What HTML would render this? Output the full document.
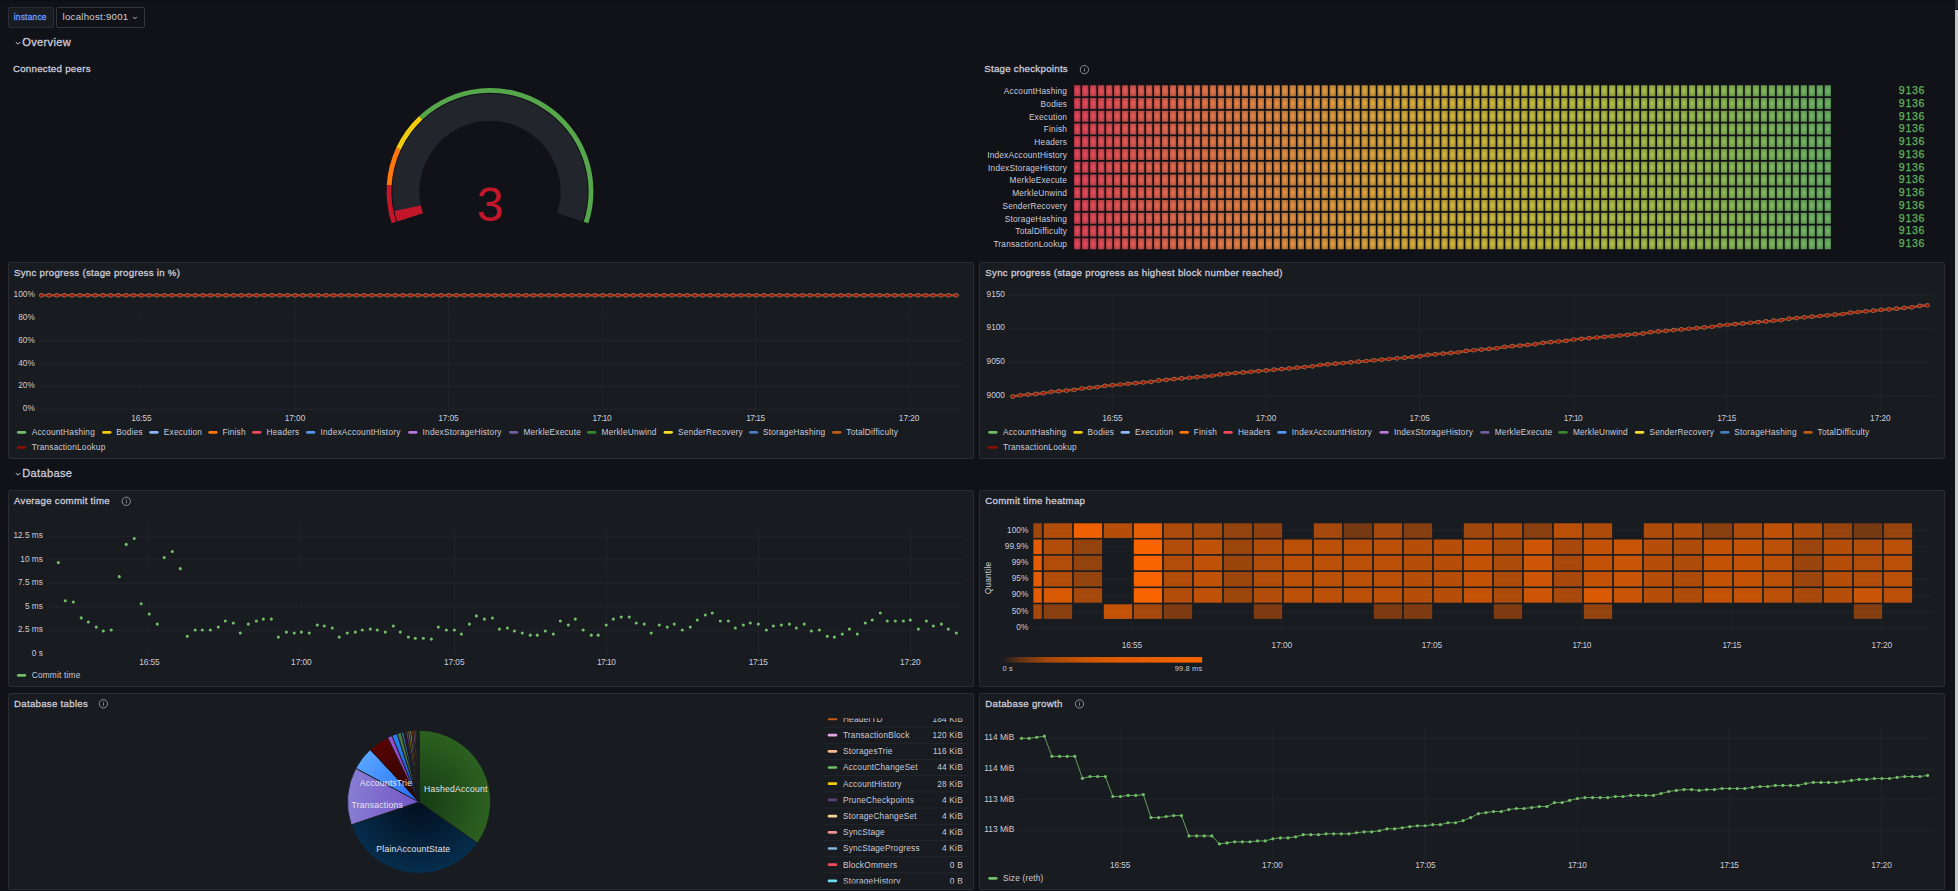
<!DOCTYPE html>
<html lang="en"><head><meta charset="utf-8"><title>reth - Grafana</title>
<style>
html,body{margin:0;padding:0;background:#111217}
body{width:1958px;height:891px;overflow:hidden;position:relative;font-family:"Liberation Sans",sans-serif;color:#ccccdc}
.t{position:absolute;white-space:nowrap;letter-spacing:.025em}
.b{-webkit-text-stroke:0.3px #ccccdc}
.panel{position:absolute;box-sizing:border-box;background:#181b1f;border:1px solid #292c32;border-radius:2px}
svg.ov{position:absolute;overflow:visible}
svg.full{position:absolute;left:0;top:0}
svg text{font-family:"Liberation Sans",sans-serif;letter-spacing:.025em}
.box{position:absolute;box-sizing:border-box;border-radius:2px}
</style></head><body>

<div class="box" style="left:8px;top:7px;width:46px;height:21px;background:#181b1f;border:1px solid #2a2d33"></div>

<div class="box" style="left:56px;top:7px;width:89px;height:21px;background:#111217;border:1px solid #34363d"></div>

<svg class="ov" width="8" height="6" style="left:131px;top:15px" viewBox="0 0 8 6"><path d="M2.1 1.9 L4 3.8 L5.9 1.9" fill="none" stroke="#ccccdc" stroke-width="0.9"/></svg>
<svg class="ov" width="8" height="6" style="left:13.6px;top:40.0px" viewBox="0 0 8 6"><path d="M1.8 2.0 L4 4.2 L6.2 2.0" fill="none" stroke="#ccccdc" stroke-width="0.95"/></svg>

<svg class="ov" width="8" height="6" style="left:13.6px;top:470.7px" viewBox="0 0 8 6"><path d="M1.8 2.0 L4 4.2 L6.2 2.0" fill="none" stroke="#ccccdc" stroke-width="0.95"/></svg>

<div class="panel" style="left:8px;top:262px;width:966px;height:197px"></div>
<div class="panel" style="left:979px;top:262px;width:966px;height:197px"></div>
<div class="panel" style="left:8px;top:490px;width:966px;height:197px"></div>
<div class="panel" style="left:979px;top:490px;width:966px;height:197px"></div>
<div class="panel" style="left:8px;top:693px;width:966px;height:197px"></div>
<div class="panel" style="left:979px;top:693px;width:966px;height:197px"></div>












<svg class="full" width="1958" height="891" viewBox="0 0 1958 891">
<defs>
<radialGradient id="cellsh" cx="0.5" cy="0.5" r="0.72"><stop offset="0.1" stop-color="#111217" stop-opacity="0"/><stop offset="1" stop-color="#111217" stop-opacity="0.34"/></radialGradient>
</defs>
<g id="gauge">
<path d="M397.18 221.56 A97.6 97.6 0 1 1 582.82 221.56 L557.14 213.22 A70.6 70.6 0 1 0 422.86 213.22 Z" fill="#22252b"/>
<path d="M397.18 221.56 A97.6 97.6 0 0 1 394.37 210.89 L420.82 205.50 A70.6 70.6 0 0 0 422.86 213.22 Z" fill="#c4162a"/>
<path d="M391.66 223.35 A103.4 103.4 0 0 1 386.80 184.91 L391.59 185.21 A98.6 98.6 0 0 0 396.23 221.87 Z" fill="#c4162a"/>
<path d="M386.80 184.91 A103.4 103.4 0 0 1 396.44 147.37 L400.78 149.42 A98.6 98.6 0 0 0 391.59 185.21 Z" fill="#ff780a"/>
<path d="M396.44 147.37 A103.4 103.4 0 0 1 419.22 116.02 L422.50 119.52 A98.6 98.6 0 0 0 400.78 149.42 Z" fill="#f2cc0c"/>
<path d="M419.22 116.02 A103.4 103.4 0 0 1 588.34 223.35 L583.77 221.87 A98.6 98.6 0 0 0 422.50 119.52 Z" fill="#56a64b"/>
<text x="490.0" y="221.2" font-size="48" fill="#c4162a" text-anchor="middle" style="letter-spacing:0">3</text>
</g>
<defs><g id="srow"><rect x="0.00" width="6.25" height="11.1" rx="0.7" fill="rgb(231,70,89)"/><rect x="7.99" width="6.25" height="11.1" rx="0.7" fill="rgb(231,73,88)"/><rect x="15.97" width="6.25" height="11.1" rx="0.7" fill="rgb(231,76,87)"/><rect x="23.96" width="6.25" height="11.1" rx="0.7" fill="rgb(231,79,86)"/><rect x="31.94" width="6.25" height="11.1" rx="0.7" fill="rgb(231,82,85)"/><rect x="39.93" width="6.25" height="11.1" rx="0.7" fill="rgb(232,85,84)"/><rect x="47.91" width="6.25" height="11.1" rx="0.7" fill="rgb(232,88,83)"/><rect x="55.90" width="6.25" height="11.1" rx="0.7" fill="rgb(232,91,82)"/><rect x="63.88" width="6.25" height="11.1" rx="0.7" fill="rgb(232,94,81)"/><rect x="71.87" width="6.25" height="11.1" rx="0.7" fill="rgb(232,97,80)"/><rect x="79.85" width="6.25" height="11.1" rx="0.7" fill="rgb(232,100,79)"/><rect x="87.84" width="6.25" height="11.1" rx="0.7" fill="rgb(232,103,78)"/><rect x="95.82" width="6.25" height="11.1" rx="0.7" fill="rgb(232,106,77)"/><rect x="103.81" width="6.25" height="11.1" rx="0.7" fill="rgb(232,109,76)"/><rect x="111.79" width="6.25" height="11.1" rx="0.7" fill="rgb(232,112,75)"/><rect x="119.78" width="6.25" height="11.1" rx="0.7" fill="rgb(232,114,74)"/><rect x="127.76" width="6.25" height="11.1" rx="0.7" fill="rgb(232,117,73)"/><rect x="135.75" width="6.25" height="11.1" rx="0.7" fill="rgb(232,120,72)"/><rect x="143.73" width="6.25" height="11.1" rx="0.7" fill="rgb(232,123,71)"/><rect x="151.72" width="6.25" height="11.1" rx="0.7" fill="rgb(232,126,71)"/><rect x="159.70" width="6.25" height="11.1" rx="0.7" fill="rgb(232,128,70)"/><rect x="167.69" width="6.25" height="11.1" rx="0.7" fill="rgb(232,131,69)"/><rect x="175.67" width="6.25" height="11.1" rx="0.7" fill="rgb(232,134,68)"/><rect x="183.66" width="6.25" height="11.1" rx="0.7" fill="rgb(232,136,67)"/><rect x="191.64" width="6.25" height="11.1" rx="0.7" fill="rgb(232,139,67)"/><rect x="199.62" width="6.25" height="11.1" rx="0.7" fill="rgb(231,141,66)"/><rect x="207.61" width="6.25" height="11.1" rx="0.7" fill="rgb(231,144,65)"/><rect x="215.59" width="6.25" height="11.1" rx="0.7" fill="rgb(231,146,65)"/><rect x="223.58" width="6.25" height="11.1" rx="0.7" fill="rgb(230,149,64)"/><rect x="231.56" width="6.25" height="11.1" rx="0.7" fill="rgb(230,151,63)"/><rect x="239.55" width="6.25" height="11.1" rx="0.7" fill="rgb(230,153,63)"/><rect x="247.53" width="6.25" height="11.1" rx="0.7" fill="rgb(229,155,62)"/><rect x="255.52" width="6.25" height="11.1" rx="0.7" fill="rgb(229,158,62)"/><rect x="263.50" width="6.25" height="11.1" rx="0.7" fill="rgb(228,160,61)"/><rect x="271.49" width="6.25" height="11.1" rx="0.7" fill="rgb(228,162,61)"/><rect x="279.48" width="6.25" height="11.1" rx="0.7" fill="rgb(227,164,61)"/><rect x="287.46" width="6.25" height="11.1" rx="0.7" fill="rgb(226,166,60)"/><rect x="295.44" width="6.25" height="11.1" rx="0.7" fill="rgb(226,168,60)"/><rect x="303.43" width="6.25" height="11.1" rx="0.7" fill="rgb(225,170,60)"/><rect x="311.42" width="6.25" height="11.1" rx="0.7" fill="rgb(224,171,59)"/><rect x="319.40" width="6.25" height="11.1" rx="0.7" fill="rgb(223,173,59)"/><rect x="327.38" width="6.25" height="11.1" rx="0.7" fill="rgb(222,175,59)"/><rect x="335.37" width="6.25" height="11.1" rx="0.7" fill="rgb(221,176,59)"/><rect x="343.36" width="6.25" height="11.1" rx="0.7" fill="rgb(220,178,59)"/><rect x="351.34" width="6.25" height="11.1" rx="0.7" fill="rgb(219,179,59)"/><rect x="359.32" width="6.25" height="11.1" rx="0.7" fill="rgb(218,181,59)"/><rect x="367.31" width="6.25" height="11.1" rx="0.7" fill="rgb(217,182,59)"/><rect x="375.30" width="6.25" height="11.1" rx="0.7" fill="rgb(216,183,59)"/><rect x="383.28" width="6.25" height="11.1" rx="0.7" fill="rgb(214,184,59)"/><rect x="391.27" width="6.25" height="11.1" rx="0.7" fill="rgb(213,186,59)"/><rect x="399.25" width="6.25" height="11.1" rx="0.7" fill="rgb(212,187,60)"/><rect x="407.24" width="6.25" height="11.1" rx="0.7" fill="rgb(210,187,60)"/><rect x="415.22" width="6.25" height="11.1" rx="0.7" fill="rgb(209,188,60)"/><rect x="423.21" width="6.25" height="11.1" rx="0.7" fill="rgb(207,189,61)"/><rect x="431.19" width="6.25" height="11.1" rx="0.7" fill="rgb(205,190,61)"/><rect x="439.18" width="6.25" height="11.1" rx="0.7" fill="rgb(204,191,61)"/><rect x="447.16" width="6.25" height="11.1" rx="0.7" fill="rgb(202,191,62)"/><rect x="455.15" width="6.25" height="11.1" rx="0.7" fill="rgb(200,192,63)"/><rect x="463.13" width="6.25" height="11.1" rx="0.7" fill="rgb(198,192,63)"/><rect x="471.12" width="6.25" height="11.1" rx="0.7" fill="rgb(196,193,64)"/><rect x="479.10" width="6.25" height="11.1" rx="0.7" fill="rgb(194,193,64)"/><rect x="487.09" width="6.25" height="11.1" rx="0.7" fill="rgb(192,193,65)"/><rect x="495.07" width="6.25" height="11.1" rx="0.7" fill="rgb(190,193,66)"/><rect x="503.06" width="6.25" height="11.1" rx="0.7" fill="rgb(188,194,67)"/><rect x="511.04" width="6.25" height="11.1" rx="0.7" fill="rgb(186,194,67)"/><rect x="519.02" width="6.25" height="11.1" rx="0.7" fill="rgb(184,194,68)"/><rect x="527.01" width="6.25" height="11.1" rx="0.7" fill="rgb(182,194,69)"/><rect x="535.00" width="6.25" height="11.1" rx="0.7" fill="rgb(179,194,70)"/><rect x="542.98" width="6.25" height="11.1" rx="0.7" fill="rgb(177,194,71)"/><rect x="550.97" width="6.25" height="11.1" rx="0.7" fill="rgb(175,194,72)"/><rect x="558.95" width="6.25" height="11.1" rx="0.7" fill="rgb(173,194,73)"/><rect x="566.94" width="6.25" height="11.1" rx="0.7" fill="rgb(170,193,74)"/><rect x="574.92" width="6.25" height="11.1" rx="0.7" fill="rgb(168,193,75)"/><rect x="582.90" width="6.25" height="11.1" rx="0.7" fill="rgb(165,193,76)"/><rect x="590.89" width="6.25" height="11.1" rx="0.7" fill="rgb(163,193,77)"/><rect x="598.88" width="6.25" height="11.1" rx="0.7" fill="rgb(160,192,78)"/><rect x="606.86" width="6.25" height="11.1" rx="0.7" fill="rgb(158,192,79)"/><rect x="614.85" width="6.25" height="11.1" rx="0.7" fill="rgb(155,192,80)"/><rect x="622.83" width="6.25" height="11.1" rx="0.7" fill="rgb(153,191,81)"/><rect x="630.82" width="6.25" height="11.1" rx="0.7" fill="rgb(150,191,82)"/><rect x="638.80" width="6.25" height="11.1" rx="0.7" fill="rgb(148,190,84)"/><rect x="646.79" width="6.25" height="11.1" rx="0.7" fill="rgb(145,190,85)"/><rect x="654.77" width="6.25" height="11.1" rx="0.7" fill="rgb(142,189,86)"/><rect x="662.75" width="6.25" height="11.1" rx="0.7" fill="rgb(140,189,87)"/><rect x="670.74" width="6.25" height="11.1" rx="0.7" fill="rgb(137,188,88)"/><rect x="678.73" width="6.25" height="11.1" rx="0.7" fill="rgb(134,188,90)"/><rect x="686.71" width="6.25" height="11.1" rx="0.7" fill="rgb(132,187,91)"/><rect x="694.70" width="6.25" height="11.1" rx="0.7" fill="rgb(129,187,92)"/><rect x="702.68" width="6.25" height="11.1" rx="0.7" fill="rgb(126,186,93)"/><rect x="710.67" width="6.25" height="11.1" rx="0.7" fill="rgb(124,185,95)"/><rect x="718.65" width="6.25" height="11.1" rx="0.7" fill="rgb(121,185,96)"/><rect x="726.63" width="6.25" height="11.1" rx="0.7" fill="rgb(118,184,97)"/><rect x="734.62" width="6.25" height="11.1" rx="0.7" fill="rgb(116,184,98)"/><rect x="742.61" width="6.25" height="11.1" rx="0.7" fill="rgb(113,183,100)"/><rect x="750.59" width="6.25" height="11.1" rx="0.7" fill="rgb(110,182,101)"/><g fill="url(#cellsh)"><rect x="0.00" width="6.25" height="11.1" rx="0.7"/><rect x="7.99" width="6.25" height="11.1" rx="0.7"/><rect x="15.97" width="6.25" height="11.1" rx="0.7"/><rect x="23.96" width="6.25" height="11.1" rx="0.7"/><rect x="31.94" width="6.25" height="11.1" rx="0.7"/><rect x="39.93" width="6.25" height="11.1" rx="0.7"/><rect x="47.91" width="6.25" height="11.1" rx="0.7"/><rect x="55.90" width="6.25" height="11.1" rx="0.7"/><rect x="63.88" width="6.25" height="11.1" rx="0.7"/><rect x="71.87" width="6.25" height="11.1" rx="0.7"/><rect x="79.85" width="6.25" height="11.1" rx="0.7"/><rect x="87.84" width="6.25" height="11.1" rx="0.7"/><rect x="95.82" width="6.25" height="11.1" rx="0.7"/><rect x="103.81" width="6.25" height="11.1" rx="0.7"/><rect x="111.79" width="6.25" height="11.1" rx="0.7"/><rect x="119.78" width="6.25" height="11.1" rx="0.7"/><rect x="127.76" width="6.25" height="11.1" rx="0.7"/><rect x="135.75" width="6.25" height="11.1" rx="0.7"/><rect x="143.73" width="6.25" height="11.1" rx="0.7"/><rect x="151.72" width="6.25" height="11.1" rx="0.7"/><rect x="159.70" width="6.25" height="11.1" rx="0.7"/><rect x="167.69" width="6.25" height="11.1" rx="0.7"/><rect x="175.67" width="6.25" height="11.1" rx="0.7"/><rect x="183.66" width="6.25" height="11.1" rx="0.7"/><rect x="191.64" width="6.25" height="11.1" rx="0.7"/><rect x="199.62" width="6.25" height="11.1" rx="0.7"/><rect x="207.61" width="6.25" height="11.1" rx="0.7"/><rect x="215.59" width="6.25" height="11.1" rx="0.7"/><rect x="223.58" width="6.25" height="11.1" rx="0.7"/><rect x="231.56" width="6.25" height="11.1" rx="0.7"/><rect x="239.55" width="6.25" height="11.1" rx="0.7"/><rect x="247.53" width="6.25" height="11.1" rx="0.7"/><rect x="255.52" width="6.25" height="11.1" rx="0.7"/><rect x="263.50" width="6.25" height="11.1" rx="0.7"/><rect x="271.49" width="6.25" height="11.1" rx="0.7"/><rect x="279.48" width="6.25" height="11.1" rx="0.7"/><rect x="287.46" width="6.25" height="11.1" rx="0.7"/><rect x="295.44" width="6.25" height="11.1" rx="0.7"/><rect x="303.43" width="6.25" height="11.1" rx="0.7"/><rect x="311.42" width="6.25" height="11.1" rx="0.7"/><rect x="319.40" width="6.25" height="11.1" rx="0.7"/><rect x="327.38" width="6.25" height="11.1" rx="0.7"/><rect x="335.37" width="6.25" height="11.1" rx="0.7"/><rect x="343.36" width="6.25" height="11.1" rx="0.7"/><rect x="351.34" width="6.25" height="11.1" rx="0.7"/><rect x="359.32" width="6.25" height="11.1" rx="0.7"/><rect x="367.31" width="6.25" height="11.1" rx="0.7"/><rect x="375.30" width="6.25" height="11.1" rx="0.7"/><rect x="383.28" width="6.25" height="11.1" rx="0.7"/><rect x="391.27" width="6.25" height="11.1" rx="0.7"/><rect x="399.25" width="6.25" height="11.1" rx="0.7"/><rect x="407.24" width="6.25" height="11.1" rx="0.7"/><rect x="415.22" width="6.25" height="11.1" rx="0.7"/><rect x="423.21" width="6.25" height="11.1" rx="0.7"/><rect x="431.19" width="6.25" height="11.1" rx="0.7"/><rect x="439.18" width="6.25" height="11.1" rx="0.7"/><rect x="447.16" width="6.25" height="11.1" rx="0.7"/><rect x="455.15" width="6.25" height="11.1" rx="0.7"/><rect x="463.13" width="6.25" height="11.1" rx="0.7"/><rect x="471.12" width="6.25" height="11.1" rx="0.7"/><rect x="479.10" width="6.25" height="11.1" rx="0.7"/><rect x="487.09" width="6.25" height="11.1" rx="0.7"/><rect x="495.07" width="6.25" height="11.1" rx="0.7"/><rect x="503.06" width="6.25" height="11.1" rx="0.7"/><rect x="511.04" width="6.25" height="11.1" rx="0.7"/><rect x="519.02" width="6.25" height="11.1" rx="0.7"/><rect x="527.01" width="6.25" height="11.1" rx="0.7"/><rect x="535.00" width="6.25" height="11.1" rx="0.7"/><rect x="542.98" width="6.25" height="11.1" rx="0.7"/><rect x="550.97" width="6.25" height="11.1" rx="0.7"/><rect x="558.95" width="6.25" height="11.1" rx="0.7"/><rect x="566.94" width="6.25" height="11.1" rx="0.7"/><rect x="574.92" width="6.25" height="11.1" rx="0.7"/><rect x="582.90" width="6.25" height="11.1" rx="0.7"/><rect x="590.89" width="6.25" height="11.1" rx="0.7"/><rect x="598.88" width="6.25" height="11.1" rx="0.7"/><rect x="606.86" width="6.25" height="11.1" rx="0.7"/><rect x="614.85" width="6.25" height="11.1" rx="0.7"/><rect x="622.83" width="6.25" height="11.1" rx="0.7"/><rect x="630.82" width="6.25" height="11.1" rx="0.7"/><rect x="638.80" width="6.25" height="11.1" rx="0.7"/><rect x="646.79" width="6.25" height="11.1" rx="0.7"/><rect x="654.77" width="6.25" height="11.1" rx="0.7"/><rect x="662.75" width="6.25" height="11.1" rx="0.7"/><rect x="670.74" width="6.25" height="11.1" rx="0.7"/><rect x="678.73" width="6.25" height="11.1" rx="0.7"/><rect x="686.71" width="6.25" height="11.1" rx="0.7"/><rect x="694.70" width="6.25" height="11.1" rx="0.7"/><rect x="702.68" width="6.25" height="11.1" rx="0.7"/><rect x="710.67" width="6.25" height="11.1" rx="0.7"/><rect x="718.65" width="6.25" height="11.1" rx="0.7"/><rect x="726.63" width="6.25" height="11.1" rx="0.7"/><rect x="734.62" width="6.25" height="11.1" rx="0.7"/><rect x="742.61" width="6.25" height="11.1" rx="0.7"/><rect x="750.59" width="6.25" height="11.1" rx="0.7"/></g></g></defs>
<g transform="translate(1074.1 0)" style="filter:blur(0.35px)"><use href="#srow" y="85.15"/><use href="#srow" y="97.90"/><use href="#srow" y="110.65"/><use href="#srow" y="123.40"/><use href="#srow" y="136.15"/><use href="#srow" y="148.90"/><use href="#srow" y="161.65"/><use href="#srow" y="174.40"/><use href="#srow" y="187.15"/><use href="#srow" y="199.90"/><use href="#srow" y="212.65"/><use href="#srow" y="225.40"/><use href="#srow" y="238.15"/></g>
<text x="1067.2" y="94.00" font-size="8.3" fill="#ccccdc" text-anchor="end">AccountHashing</text>
<text x="1898.8" y="94.00" font-size="10.6" fill="#64b25c" stroke="#64b25c" stroke-width="0.25" style="letter-spacing:.065em">9136</text>
<text x="1067.2" y="106.75" font-size="8.3" fill="#ccccdc" text-anchor="end">Bodies</text>
<text x="1898.8" y="106.75" font-size="10.6" fill="#64b25c" stroke="#64b25c" stroke-width="0.25" style="letter-spacing:.065em">9136</text>
<text x="1067.2" y="119.50" font-size="8.3" fill="#ccccdc" text-anchor="end">Execution</text>
<text x="1898.8" y="119.50" font-size="10.6" fill="#64b25c" stroke="#64b25c" stroke-width="0.25" style="letter-spacing:.065em">9136</text>
<text x="1067.2" y="132.25" font-size="8.3" fill="#ccccdc" text-anchor="end">Finish</text>
<text x="1898.8" y="132.25" font-size="10.6" fill="#64b25c" stroke="#64b25c" stroke-width="0.25" style="letter-spacing:.065em">9136</text>
<text x="1067.2" y="145.00" font-size="8.3" fill="#ccccdc" text-anchor="end">Headers</text>
<text x="1898.8" y="145.00" font-size="10.6" fill="#64b25c" stroke="#64b25c" stroke-width="0.25" style="letter-spacing:.065em">9136</text>
<text x="1067.2" y="157.75" font-size="8.3" fill="#ccccdc" text-anchor="end">IndexAccountHistory</text>
<text x="1898.8" y="157.75" font-size="10.6" fill="#64b25c" stroke="#64b25c" stroke-width="0.25" style="letter-spacing:.065em">9136</text>
<text x="1067.2" y="170.50" font-size="8.3" fill="#ccccdc" text-anchor="end">IndexStorageHistory</text>
<text x="1898.8" y="170.50" font-size="10.6" fill="#64b25c" stroke="#64b25c" stroke-width="0.25" style="letter-spacing:.065em">9136</text>
<text x="1067.2" y="183.25" font-size="8.3" fill="#ccccdc" text-anchor="end">MerkleExecute</text>
<text x="1898.8" y="183.25" font-size="10.6" fill="#64b25c" stroke="#64b25c" stroke-width="0.25" style="letter-spacing:.065em">9136</text>
<text x="1067.2" y="196.00" font-size="8.3" fill="#ccccdc" text-anchor="end">MerkleUnwind</text>
<text x="1898.8" y="196.00" font-size="10.6" fill="#64b25c" stroke="#64b25c" stroke-width="0.25" style="letter-spacing:.065em">9136</text>
<text x="1067.2" y="208.75" font-size="8.3" fill="#ccccdc" text-anchor="end">SenderRecovery</text>
<text x="1898.8" y="208.75" font-size="10.6" fill="#64b25c" stroke="#64b25c" stroke-width="0.25" style="letter-spacing:.065em">9136</text>
<text x="1067.2" y="221.50" font-size="8.3" fill="#ccccdc" text-anchor="end">StorageHashing</text>
<text x="1898.8" y="221.50" font-size="10.6" fill="#64b25c" stroke="#64b25c" stroke-width="0.25" style="letter-spacing:.065em">9136</text>
<text x="1067.2" y="234.25" font-size="8.3" fill="#ccccdc" text-anchor="end">TotalDifficulty</text>
<text x="1898.8" y="234.25" font-size="10.6" fill="#64b25c" stroke="#64b25c" stroke-width="0.25" style="letter-spacing:.065em">9136</text>
<text x="1067.2" y="247.00" font-size="8.3" fill="#ccccdc" text-anchor="end">TransactionLookup</text>
<text x="1898.8" y="247.00" font-size="10.6" fill="#64b25c" stroke="#64b25c" stroke-width="0.25" style="letter-spacing:.065em">9136</text>
<g stroke="#1e2127" stroke-width="1.6"><line x1="38.7" y1="295.20" x2="962.7" y2="295.20"/><line x1="38.7" y1="318.00" x2="962.7" y2="318.00"/><line x1="38.7" y1="340.80" x2="962.7" y2="340.80"/><line x1="38.7" y1="363.60" x2="962.7" y2="363.60"/><line x1="38.7" y1="386.40" x2="962.7" y2="386.40"/><line x1="38.7" y1="409.20" x2="962.7" y2="409.20"/></g><g stroke="#202328" stroke-width="1.0"><line x1="141.40" y1="294.60" x2="141.40" y2="411.90"/><line x1="294.95" y1="294.60" x2="294.95" y2="411.90"/><line x1="448.50" y1="294.60" x2="448.50" y2="411.90"/><line x1="602.05" y1="294.60" x2="602.05" y2="411.90"/><line x1="755.60" y1="294.60" x2="755.60" y2="411.90"/><line x1="909.15" y1="294.60" x2="909.15" y2="411.90"/></g>
<text x="34.8" y="297.10" font-size="8.3" fill="#ccccdc" text-anchor="end" style="letter-spacing:0">100%</text><text x="34.8" y="319.90" font-size="8.3" fill="#ccccdc" text-anchor="end" style="letter-spacing:0">80%</text><text x="34.8" y="342.70" font-size="8.3" fill="#ccccdc" text-anchor="end" style="letter-spacing:0">60%</text><text x="34.8" y="365.50" font-size="8.3" fill="#ccccdc" text-anchor="end" style="letter-spacing:0">40%</text><text x="34.8" y="388.30" font-size="8.3" fill="#ccccdc" text-anchor="end" style="letter-spacing:0">20%</text><text x="34.8" y="411.10" font-size="8.3" fill="#ccccdc" text-anchor="end" style="letter-spacing:0">0%</text>
<text x="131.30" y="421.2" font-size="8.3" fill="#ccccdc" textLength="20.2" lengthAdjust="spacing" style="letter-spacing:0">16:55</text><text x="284.65" y="421.2" font-size="8.3" fill="#ccccdc" textLength="20.6" lengthAdjust="spacing" style="letter-spacing:0">17:00</text><text x="438.30" y="421.2" font-size="8.3" fill="#ccccdc" textLength="20.4" lengthAdjust="spacing" style="letter-spacing:0">17:05</text><text x="592.60" y="421.2" font-size="8.3" fill="#ccccdc" textLength="18.9" lengthAdjust="spacing" style="letter-spacing:0">17:10</text><text x="746.15" y="421.2" font-size="8.3" fill="#ccccdc" textLength="18.9" lengthAdjust="spacing" style="letter-spacing:0">17:15</text><text x="898.85" y="421.2" font-size="8.3" fill="#ccccdc" textLength="20.6" lengthAdjust="spacing" style="letter-spacing:0">17:20</text>
<polyline fill="none" stroke="#cf9a6c" stroke-opacity="0.5" stroke-width="2.5" stroke-linejoin="round" points="41.40,295.30 49.09,295.30 56.78,295.30 64.46,295.30 72.15,295.30 79.84,295.30 87.53,295.30 95.22,295.30 102.91,295.30 110.59,295.30 118.28,295.30 125.97,295.30 133.66,295.30 141.35,295.30 149.04,295.30 156.72,295.30 164.41,295.30 172.10,295.30 179.79,295.30 187.48,295.30 195.16,295.30 202.85,295.30 210.54,295.30 218.23,295.30 225.92,295.30 233.61,295.30 241.29,295.30 248.98,295.30 256.67,295.30 264.36,295.30 272.05,295.30 279.74,295.30 287.42,295.30 295.11,295.30 302.80,295.30 310.49,295.30 318.18,295.30 325.86,295.30 333.55,295.30 341.24,295.30 348.93,295.30 356.62,295.30 364.31,295.30 371.99,295.30 379.68,295.30 387.37,295.30 395.06,295.30 402.75,295.30 410.44,295.30 418.12,295.30 425.81,295.30 433.50,295.30 441.19,295.30 448.88,295.30 456.56,295.30 464.25,295.30 471.94,295.30 479.63,295.30 487.32,295.30 495.01,295.30 502.69,295.30 510.38,295.30 518.07,295.30 525.76,295.30 533.45,295.30 541.14,295.30 548.82,295.30 556.51,295.30 564.20,295.30 571.89,295.30 579.58,295.30 587.26,295.30 594.95,295.30 602.64,295.30 610.33,295.30 618.02,295.30 625.71,295.30 633.39,295.30 641.08,295.30 648.77,295.30 656.46,295.30 664.15,295.30 671.84,295.30 679.52,295.30 687.21,295.30 694.90,295.30 702.59,295.30 710.28,295.30 717.96,295.30 725.65,295.30 733.34,295.30 741.03,295.30 748.72,295.30 756.41,295.30 764.09,295.30 771.78,295.30 779.47,295.30 787.16,295.30 794.85,295.30 802.54,295.30 810.22,295.30 817.91,295.30 825.60,295.30 833.29,295.30 840.98,295.30 848.66,295.30 856.35,295.30 864.04,295.30 871.73,295.30 879.42,295.30 887.11,295.30 894.79,295.30 902.48,295.30 910.17,295.30 917.86,295.30 925.55,295.30 933.24,295.30 940.92,295.30 948.61,295.30 956.30,295.30"/>
<g fill="#cf9a6c" fill-opacity="0.75"><circle cx="41.40" cy="295.30" r="2.35"/><circle cx="49.09" cy="295.30" r="2.35"/><circle cx="56.78" cy="295.30" r="2.35"/><circle cx="64.46" cy="295.30" r="2.35"/><circle cx="72.15" cy="295.30" r="2.35"/><circle cx="79.84" cy="295.30" r="2.35"/><circle cx="87.53" cy="295.30" r="2.35"/><circle cx="95.22" cy="295.30" r="2.35"/><circle cx="102.91" cy="295.30" r="2.35"/><circle cx="110.59" cy="295.30" r="2.35"/><circle cx="118.28" cy="295.30" r="2.35"/><circle cx="125.97" cy="295.30" r="2.35"/><circle cx="133.66" cy="295.30" r="2.35"/><circle cx="141.35" cy="295.30" r="2.35"/><circle cx="149.04" cy="295.30" r="2.35"/><circle cx="156.72" cy="295.30" r="2.35"/><circle cx="164.41" cy="295.30" r="2.35"/><circle cx="172.10" cy="295.30" r="2.35"/><circle cx="179.79" cy="295.30" r="2.35"/><circle cx="187.48" cy="295.30" r="2.35"/><circle cx="195.16" cy="295.30" r="2.35"/><circle cx="202.85" cy="295.30" r="2.35"/><circle cx="210.54" cy="295.30" r="2.35"/><circle cx="218.23" cy="295.30" r="2.35"/><circle cx="225.92" cy="295.30" r="2.35"/><circle cx="233.61" cy="295.30" r="2.35"/><circle cx="241.29" cy="295.30" r="2.35"/><circle cx="248.98" cy="295.30" r="2.35"/><circle cx="256.67" cy="295.30" r="2.35"/><circle cx="264.36" cy="295.30" r="2.35"/><circle cx="272.05" cy="295.30" r="2.35"/><circle cx="279.74" cy="295.30" r="2.35"/><circle cx="287.42" cy="295.30" r="2.35"/><circle cx="295.11" cy="295.30" r="2.35"/><circle cx="302.80" cy="295.30" r="2.35"/><circle cx="310.49" cy="295.30" r="2.35"/><circle cx="318.18" cy="295.30" r="2.35"/><circle cx="325.86" cy="295.30" r="2.35"/><circle cx="333.55" cy="295.30" r="2.35"/><circle cx="341.24" cy="295.30" r="2.35"/><circle cx="348.93" cy="295.30" r="2.35"/><circle cx="356.62" cy="295.30" r="2.35"/><circle cx="364.31" cy="295.30" r="2.35"/><circle cx="371.99" cy="295.30" r="2.35"/><circle cx="379.68" cy="295.30" r="2.35"/><circle cx="387.37" cy="295.30" r="2.35"/><circle cx="395.06" cy="295.30" r="2.35"/><circle cx="402.75" cy="295.30" r="2.35"/><circle cx="410.44" cy="295.30" r="2.35"/><circle cx="418.12" cy="295.30" r="2.35"/><circle cx="425.81" cy="295.30" r="2.35"/><circle cx="433.50" cy="295.30" r="2.35"/><circle cx="441.19" cy="295.30" r="2.35"/><circle cx="448.88" cy="295.30" r="2.35"/><circle cx="456.56" cy="295.30" r="2.35"/><circle cx="464.25" cy="295.30" r="2.35"/><circle cx="471.94" cy="295.30" r="2.35"/><circle cx="479.63" cy="295.30" r="2.35"/><circle cx="487.32" cy="295.30" r="2.35"/><circle cx="495.01" cy="295.30" r="2.35"/><circle cx="502.69" cy="295.30" r="2.35"/><circle cx="510.38" cy="295.30" r="2.35"/><circle cx="518.07" cy="295.30" r="2.35"/><circle cx="525.76" cy="295.30" r="2.35"/><circle cx="533.45" cy="295.30" r="2.35"/><circle cx="541.14" cy="295.30" r="2.35"/><circle cx="548.82" cy="295.30" r="2.35"/><circle cx="556.51" cy="295.30" r="2.35"/><circle cx="564.20" cy="295.30" r="2.35"/><circle cx="571.89" cy="295.30" r="2.35"/><circle cx="579.58" cy="295.30" r="2.35"/><circle cx="587.26" cy="295.30" r="2.35"/><circle cx="594.95" cy="295.30" r="2.35"/><circle cx="602.64" cy="295.30" r="2.35"/><circle cx="610.33" cy="295.30" r="2.35"/><circle cx="618.02" cy="295.30" r="2.35"/><circle cx="625.71" cy="295.30" r="2.35"/><circle cx="633.39" cy="295.30" r="2.35"/><circle cx="641.08" cy="295.30" r="2.35"/><circle cx="648.77" cy="295.30" r="2.35"/><circle cx="656.46" cy="295.30" r="2.35"/><circle cx="664.15" cy="295.30" r="2.35"/><circle cx="671.84" cy="295.30" r="2.35"/><circle cx="679.52" cy="295.30" r="2.35"/><circle cx="687.21" cy="295.30" r="2.35"/><circle cx="694.90" cy="295.30" r="2.35"/><circle cx="702.59" cy="295.30" r="2.35"/><circle cx="710.28" cy="295.30" r="2.35"/><circle cx="717.96" cy="295.30" r="2.35"/><circle cx="725.65" cy="295.30" r="2.35"/><circle cx="733.34" cy="295.30" r="2.35"/><circle cx="741.03" cy="295.30" r="2.35"/><circle cx="748.72" cy="295.30" r="2.35"/><circle cx="756.41" cy="295.30" r="2.35"/><circle cx="764.09" cy="295.30" r="2.35"/><circle cx="771.78" cy="295.30" r="2.35"/><circle cx="779.47" cy="295.30" r="2.35"/><circle cx="787.16" cy="295.30" r="2.35"/><circle cx="794.85" cy="295.30" r="2.35"/><circle cx="802.54" cy="295.30" r="2.35"/><circle cx="810.22" cy="295.30" r="2.35"/><circle cx="817.91" cy="295.30" r="2.35"/><circle cx="825.60" cy="295.30" r="2.35"/><circle cx="833.29" cy="295.30" r="2.35"/><circle cx="840.98" cy="295.30" r="2.35"/><circle cx="848.66" cy="295.30" r="2.35"/><circle cx="856.35" cy="295.30" r="2.35"/><circle cx="864.04" cy="295.30" r="2.35"/><circle cx="871.73" cy="295.30" r="2.35"/><circle cx="879.42" cy="295.30" r="2.35"/><circle cx="887.11" cy="295.30" r="2.35"/><circle cx="894.79" cy="295.30" r="2.35"/><circle cx="902.48" cy="295.30" r="2.35"/><circle cx="910.17" cy="295.30" r="2.35"/><circle cx="917.86" cy="295.30" r="2.35"/><circle cx="925.55" cy="295.30" r="2.35"/><circle cx="933.24" cy="295.30" r="2.35"/><circle cx="940.92" cy="295.30" r="2.35"/><circle cx="948.61" cy="295.30" r="2.35"/><circle cx="956.30" cy="295.30" r="2.35"/></g>
<polyline fill="none" stroke="#b93d16" stroke-width="1.35" stroke-linejoin="round" points="41.40,295.30 49.09,295.30 56.78,295.30 64.46,295.30 72.15,295.30 79.84,295.30 87.53,295.30 95.22,295.30 102.91,295.30 110.59,295.30 118.28,295.30 125.97,295.30 133.66,295.30 141.35,295.30 149.04,295.30 156.72,295.30 164.41,295.30 172.10,295.30 179.79,295.30 187.48,295.30 195.16,295.30 202.85,295.30 210.54,295.30 218.23,295.30 225.92,295.30 233.61,295.30 241.29,295.30 248.98,295.30 256.67,295.30 264.36,295.30 272.05,295.30 279.74,295.30 287.42,295.30 295.11,295.30 302.80,295.30 310.49,295.30 318.18,295.30 325.86,295.30 333.55,295.30 341.24,295.30 348.93,295.30 356.62,295.30 364.31,295.30 371.99,295.30 379.68,295.30 387.37,295.30 395.06,295.30 402.75,295.30 410.44,295.30 418.12,295.30 425.81,295.30 433.50,295.30 441.19,295.30 448.88,295.30 456.56,295.30 464.25,295.30 471.94,295.30 479.63,295.30 487.32,295.30 495.01,295.30 502.69,295.30 510.38,295.30 518.07,295.30 525.76,295.30 533.45,295.30 541.14,295.30 548.82,295.30 556.51,295.30 564.20,295.30 571.89,295.30 579.58,295.30 587.26,295.30 594.95,295.30 602.64,295.30 610.33,295.30 618.02,295.30 625.71,295.30 633.39,295.30 641.08,295.30 648.77,295.30 656.46,295.30 664.15,295.30 671.84,295.30 679.52,295.30 687.21,295.30 694.90,295.30 702.59,295.30 710.28,295.30 717.96,295.30 725.65,295.30 733.34,295.30 741.03,295.30 748.72,295.30 756.41,295.30 764.09,295.30 771.78,295.30 779.47,295.30 787.16,295.30 794.85,295.30 802.54,295.30 810.22,295.30 817.91,295.30 825.60,295.30 833.29,295.30 840.98,295.30 848.66,295.30 856.35,295.30 864.04,295.30 871.73,295.30 879.42,295.30 887.11,295.30 894.79,295.30 902.48,295.30 910.17,295.30 917.86,295.30 925.55,295.30 933.24,295.30 940.92,295.30 948.61,295.30 956.30,295.30"/>
<g fill="#9a1300"><circle cx="41.40" cy="295.30" r="1.65"/><circle cx="49.09" cy="295.30" r="1.65"/><circle cx="56.78" cy="295.30" r="1.65"/><circle cx="64.46" cy="295.30" r="1.65"/><circle cx="72.15" cy="295.30" r="1.65"/><circle cx="79.84" cy="295.30" r="1.65"/><circle cx="87.53" cy="295.30" r="1.65"/><circle cx="95.22" cy="295.30" r="1.65"/><circle cx="102.91" cy="295.30" r="1.65"/><circle cx="110.59" cy="295.30" r="1.65"/><circle cx="118.28" cy="295.30" r="1.65"/><circle cx="125.97" cy="295.30" r="1.65"/><circle cx="133.66" cy="295.30" r="1.65"/><circle cx="141.35" cy="295.30" r="1.65"/><circle cx="149.04" cy="295.30" r="1.65"/><circle cx="156.72" cy="295.30" r="1.65"/><circle cx="164.41" cy="295.30" r="1.65"/><circle cx="172.10" cy="295.30" r="1.65"/><circle cx="179.79" cy="295.30" r="1.65"/><circle cx="187.48" cy="295.30" r="1.65"/><circle cx="195.16" cy="295.30" r="1.65"/><circle cx="202.85" cy="295.30" r="1.65"/><circle cx="210.54" cy="295.30" r="1.65"/><circle cx="218.23" cy="295.30" r="1.65"/><circle cx="225.92" cy="295.30" r="1.65"/><circle cx="233.61" cy="295.30" r="1.65"/><circle cx="241.29" cy="295.30" r="1.65"/><circle cx="248.98" cy="295.30" r="1.65"/><circle cx="256.67" cy="295.30" r="1.65"/><circle cx="264.36" cy="295.30" r="1.65"/><circle cx="272.05" cy="295.30" r="1.65"/><circle cx="279.74" cy="295.30" r="1.65"/><circle cx="287.42" cy="295.30" r="1.65"/><circle cx="295.11" cy="295.30" r="1.65"/><circle cx="302.80" cy="295.30" r="1.65"/><circle cx="310.49" cy="295.30" r="1.65"/><circle cx="318.18" cy="295.30" r="1.65"/><circle cx="325.86" cy="295.30" r="1.65"/><circle cx="333.55" cy="295.30" r="1.65"/><circle cx="341.24" cy="295.30" r="1.65"/><circle cx="348.93" cy="295.30" r="1.65"/><circle cx="356.62" cy="295.30" r="1.65"/><circle cx="364.31" cy="295.30" r="1.65"/><circle cx="371.99" cy="295.30" r="1.65"/><circle cx="379.68" cy="295.30" r="1.65"/><circle cx="387.37" cy="295.30" r="1.65"/><circle cx="395.06" cy="295.30" r="1.65"/><circle cx="402.75" cy="295.30" r="1.65"/><circle cx="410.44" cy="295.30" r="1.65"/><circle cx="418.12" cy="295.30" r="1.65"/><circle cx="425.81" cy="295.30" r="1.65"/><circle cx="433.50" cy="295.30" r="1.65"/><circle cx="441.19" cy="295.30" r="1.65"/><circle cx="448.88" cy="295.30" r="1.65"/><circle cx="456.56" cy="295.30" r="1.65"/><circle cx="464.25" cy="295.30" r="1.65"/><circle cx="471.94" cy="295.30" r="1.65"/><circle cx="479.63" cy="295.30" r="1.65"/><circle cx="487.32" cy="295.30" r="1.65"/><circle cx="495.01" cy="295.30" r="1.65"/><circle cx="502.69" cy="295.30" r="1.65"/><circle cx="510.38" cy="295.30" r="1.65"/><circle cx="518.07" cy="295.30" r="1.65"/><circle cx="525.76" cy="295.30" r="1.65"/><circle cx="533.45" cy="295.30" r="1.65"/><circle cx="541.14" cy="295.30" r="1.65"/><circle cx="548.82" cy="295.30" r="1.65"/><circle cx="556.51" cy="295.30" r="1.65"/><circle cx="564.20" cy="295.30" r="1.65"/><circle cx="571.89" cy="295.30" r="1.65"/><circle cx="579.58" cy="295.30" r="1.65"/><circle cx="587.26" cy="295.30" r="1.65"/><circle cx="594.95" cy="295.30" r="1.65"/><circle cx="602.64" cy="295.30" r="1.65"/><circle cx="610.33" cy="295.30" r="1.65"/><circle cx="618.02" cy="295.30" r="1.65"/><circle cx="625.71" cy="295.30" r="1.65"/><circle cx="633.39" cy="295.30" r="1.65"/><circle cx="641.08" cy="295.30" r="1.65"/><circle cx="648.77" cy="295.30" r="1.65"/><circle cx="656.46" cy="295.30" r="1.65"/><circle cx="664.15" cy="295.30" r="1.65"/><circle cx="671.84" cy="295.30" r="1.65"/><circle cx="679.52" cy="295.30" r="1.65"/><circle cx="687.21" cy="295.30" r="1.65"/><circle cx="694.90" cy="295.30" r="1.65"/><circle cx="702.59" cy="295.30" r="1.65"/><circle cx="710.28" cy="295.30" r="1.65"/><circle cx="717.96" cy="295.30" r="1.65"/><circle cx="725.65" cy="295.30" r="1.65"/><circle cx="733.34" cy="295.30" r="1.65"/><circle cx="741.03" cy="295.30" r="1.65"/><circle cx="748.72" cy="295.30" r="1.65"/><circle cx="756.41" cy="295.30" r="1.65"/><circle cx="764.09" cy="295.30" r="1.65"/><circle cx="771.78" cy="295.30" r="1.65"/><circle cx="779.47" cy="295.30" r="1.65"/><circle cx="787.16" cy="295.30" r="1.65"/><circle cx="794.85" cy="295.30" r="1.65"/><circle cx="802.54" cy="295.30" r="1.65"/><circle cx="810.22" cy="295.30" r="1.65"/><circle cx="817.91" cy="295.30" r="1.65"/><circle cx="825.60" cy="295.30" r="1.65"/><circle cx="833.29" cy="295.30" r="1.65"/><circle cx="840.98" cy="295.30" r="1.65"/><circle cx="848.66" cy="295.30" r="1.65"/><circle cx="856.35" cy="295.30" r="1.65"/><circle cx="864.04" cy="295.30" r="1.65"/><circle cx="871.73" cy="295.30" r="1.65"/><circle cx="879.42" cy="295.30" r="1.65"/><circle cx="887.11" cy="295.30" r="1.65"/><circle cx="894.79" cy="295.30" r="1.65"/><circle cx="902.48" cy="295.30" r="1.65"/><circle cx="910.17" cy="295.30" r="1.65"/><circle cx="917.86" cy="295.30" r="1.65"/><circle cx="925.55" cy="295.30" r="1.65"/><circle cx="933.24" cy="295.30" r="1.65"/><circle cx="940.92" cy="295.30" r="1.65"/><circle cx="948.61" cy="295.30" r="1.65"/><circle cx="956.30" cy="295.30" r="1.65"/></g>
<g stroke="#1e2127" stroke-width="1.6"><line x1="1008.3" y1="295.20" x2="1934.3" y2="295.20"/><line x1="1008.3" y1="328.50" x2="1934.3" y2="328.50"/><line x1="1008.3" y1="362.30" x2="1934.3" y2="362.30"/><line x1="1008.3" y1="395.90" x2="1934.3" y2="395.90"/></g><g stroke="#202328" stroke-width="1.0"><line x1="1112.40" y1="294.60" x2="1112.40" y2="411.90"/><line x1="1266.00" y1="294.60" x2="1266.00" y2="411.90"/><line x1="1419.60" y1="294.60" x2="1419.60" y2="411.90"/><line x1="1573.20" y1="294.60" x2="1573.20" y2="411.90"/><line x1="1726.80" y1="294.60" x2="1726.80" y2="411.90"/><line x1="1880.40" y1="294.60" x2="1880.40" y2="411.90"/></g>
<text x="1005.0" y="297.10" font-size="8.3" fill="#ccccdc" text-anchor="end" style="letter-spacing:0">9150</text><text x="1005.0" y="330.40" font-size="8.3" fill="#ccccdc" text-anchor="end" style="letter-spacing:0">9100</text><text x="1005.0" y="364.20" font-size="8.3" fill="#ccccdc" text-anchor="end" style="letter-spacing:0">9050</text><text x="1005.0" y="397.80" font-size="8.3" fill="#ccccdc" text-anchor="end" style="letter-spacing:0">9000</text>
<text x="1102.30" y="421.2" font-size="8.3" fill="#ccccdc" textLength="20.2" lengthAdjust="spacing" style="letter-spacing:0">16:55</text><text x="1255.70" y="421.2" font-size="8.3" fill="#ccccdc" textLength="20.6" lengthAdjust="spacing" style="letter-spacing:0">17:00</text><text x="1409.40" y="421.2" font-size="8.3" fill="#ccccdc" textLength="20.4" lengthAdjust="spacing" style="letter-spacing:0">17:05</text><text x="1563.75" y="421.2" font-size="8.3" fill="#ccccdc" textLength="18.9" lengthAdjust="spacing" style="letter-spacing:0">17:10</text><text x="1717.35" y="421.2" font-size="8.3" fill="#ccccdc" textLength="18.9" lengthAdjust="spacing" style="letter-spacing:0">17:15</text><text x="1870.10" y="421.2" font-size="8.3" fill="#ccccdc" textLength="20.6" lengthAdjust="spacing" style="letter-spacing:0">17:20</text>
<polyline fill="none" stroke="#cf9a6c" stroke-opacity="0.5" stroke-width="2.5" stroke-linejoin="round" points="1012.60,396.57 1020.29,395.23 1027.97,394.56 1035.66,393.89 1043.35,393.21 1051.03,391.87 1058.72,391.20 1066.41,390.53 1074.09,389.86 1081.78,388.52 1089.47,387.84 1097.15,387.17 1104.84,385.83 1112.53,385.16 1120.21,384.49 1127.90,383.82 1135.58,383.15 1143.27,382.47 1150.96,381.80 1158.64,380.46 1166.33,379.79 1174.02,379.12 1181.70,378.45 1189.39,377.77 1197.08,377.10 1204.76,376.43 1212.45,375.76 1220.14,374.42 1227.82,373.75 1235.51,373.08 1243.20,372.40 1250.88,371.73 1258.57,371.06 1266.26,370.39 1273.94,369.72 1281.63,369.05 1289.32,368.38 1297.00,367.71 1304.69,367.03 1312.38,366.36 1320.06,365.02 1327.75,364.35 1335.44,363.68 1343.12,363.01 1350.81,362.33 1358.49,361.66 1366.18,360.99 1373.87,360.32 1381.55,359.65 1389.24,358.98 1396.93,358.31 1404.61,357.64 1412.30,356.96 1419.99,356.29 1427.67,354.95 1435.36,354.28 1443.05,353.61 1450.73,352.94 1458.42,352.27 1466.11,350.92 1473.79,350.25 1481.48,349.58 1489.17,348.91 1496.85,348.24 1504.54,346.90 1512.23,346.22 1519.91,345.55 1527.60,344.88 1535.29,344.21 1542.97,342.87 1550.66,342.20 1558.35,341.52 1566.03,340.85 1573.72,339.51 1581.41,338.84 1589.09,338.17 1596.78,337.50 1604.46,336.83 1612.15,336.15 1619.84,335.48 1627.52,334.81 1635.21,334.14 1642.90,333.47 1650.58,332.13 1658.27,331.46 1665.96,330.78 1673.64,330.11 1681.33,329.44 1689.02,328.77 1696.70,328.10 1704.39,327.43 1712.08,326.76 1719.76,325.41 1727.45,324.74 1735.14,324.07 1742.82,323.40 1750.51,322.73 1758.20,322.06 1765.88,321.39 1773.57,320.71 1781.26,320.04 1788.94,318.70 1796.63,318.03 1804.32,317.36 1812.00,316.69 1819.69,316.02 1827.37,315.34 1835.06,314.67 1842.75,314.00 1850.43,312.66 1858.12,311.99 1865.81,311.32 1873.49,310.64 1881.18,309.97 1888.87,309.30 1896.55,308.63 1904.24,307.96 1911.93,307.29 1919.61,305.95 1927.30,305.27"/>
<g fill="#cf9a6c" fill-opacity="0.75"><circle cx="1012.60" cy="396.57" r="2.35"/><circle cx="1020.29" cy="395.23" r="2.35"/><circle cx="1027.97" cy="394.56" r="2.35"/><circle cx="1035.66" cy="393.89" r="2.35"/><circle cx="1043.35" cy="393.21" r="2.35"/><circle cx="1051.03" cy="391.87" r="2.35"/><circle cx="1058.72" cy="391.20" r="2.35"/><circle cx="1066.41" cy="390.53" r="2.35"/><circle cx="1074.09" cy="389.86" r="2.35"/><circle cx="1081.78" cy="388.52" r="2.35"/><circle cx="1089.47" cy="387.84" r="2.35"/><circle cx="1097.15" cy="387.17" r="2.35"/><circle cx="1104.84" cy="385.83" r="2.35"/><circle cx="1112.53" cy="385.16" r="2.35"/><circle cx="1120.21" cy="384.49" r="2.35"/><circle cx="1127.90" cy="383.82" r="2.35"/><circle cx="1135.58" cy="383.15" r="2.35"/><circle cx="1143.27" cy="382.47" r="2.35"/><circle cx="1150.96" cy="381.80" r="2.35"/><circle cx="1158.64" cy="380.46" r="2.35"/><circle cx="1166.33" cy="379.79" r="2.35"/><circle cx="1174.02" cy="379.12" r="2.35"/><circle cx="1181.70" cy="378.45" r="2.35"/><circle cx="1189.39" cy="377.77" r="2.35"/><circle cx="1197.08" cy="377.10" r="2.35"/><circle cx="1204.76" cy="376.43" r="2.35"/><circle cx="1212.45" cy="375.76" r="2.35"/><circle cx="1220.14" cy="374.42" r="2.35"/><circle cx="1227.82" cy="373.75" r="2.35"/><circle cx="1235.51" cy="373.08" r="2.35"/><circle cx="1243.20" cy="372.40" r="2.35"/><circle cx="1250.88" cy="371.73" r="2.35"/><circle cx="1258.57" cy="371.06" r="2.35"/><circle cx="1266.26" cy="370.39" r="2.35"/><circle cx="1273.94" cy="369.72" r="2.35"/><circle cx="1281.63" cy="369.05" r="2.35"/><circle cx="1289.32" cy="368.38" r="2.35"/><circle cx="1297.00" cy="367.71" r="2.35"/><circle cx="1304.69" cy="367.03" r="2.35"/><circle cx="1312.38" cy="366.36" r="2.35"/><circle cx="1320.06" cy="365.02" r="2.35"/><circle cx="1327.75" cy="364.35" r="2.35"/><circle cx="1335.44" cy="363.68" r="2.35"/><circle cx="1343.12" cy="363.01" r="2.35"/><circle cx="1350.81" cy="362.33" r="2.35"/><circle cx="1358.49" cy="361.66" r="2.35"/><circle cx="1366.18" cy="360.99" r="2.35"/><circle cx="1373.87" cy="360.32" r="2.35"/><circle cx="1381.55" cy="359.65" r="2.35"/><circle cx="1389.24" cy="358.98" r="2.35"/><circle cx="1396.93" cy="358.31" r="2.35"/><circle cx="1404.61" cy="357.64" r="2.35"/><circle cx="1412.30" cy="356.96" r="2.35"/><circle cx="1419.99" cy="356.29" r="2.35"/><circle cx="1427.67" cy="354.95" r="2.35"/><circle cx="1435.36" cy="354.28" r="2.35"/><circle cx="1443.05" cy="353.61" r="2.35"/><circle cx="1450.73" cy="352.94" r="2.35"/><circle cx="1458.42" cy="352.27" r="2.35"/><circle cx="1466.11" cy="350.92" r="2.35"/><circle cx="1473.79" cy="350.25" r="2.35"/><circle cx="1481.48" cy="349.58" r="2.35"/><circle cx="1489.17" cy="348.91" r="2.35"/><circle cx="1496.85" cy="348.24" r="2.35"/><circle cx="1504.54" cy="346.90" r="2.35"/><circle cx="1512.23" cy="346.22" r="2.35"/><circle cx="1519.91" cy="345.55" r="2.35"/><circle cx="1527.60" cy="344.88" r="2.35"/><circle cx="1535.29" cy="344.21" r="2.35"/><circle cx="1542.97" cy="342.87" r="2.35"/><circle cx="1550.66" cy="342.20" r="2.35"/><circle cx="1558.35" cy="341.52" r="2.35"/><circle cx="1566.03" cy="340.85" r="2.35"/><circle cx="1573.72" cy="339.51" r="2.35"/><circle cx="1581.41" cy="338.84" r="2.35"/><circle cx="1589.09" cy="338.17" r="2.35"/><circle cx="1596.78" cy="337.50" r="2.35"/><circle cx="1604.46" cy="336.83" r="2.35"/><circle cx="1612.15" cy="336.15" r="2.35"/><circle cx="1619.84" cy="335.48" r="2.35"/><circle cx="1627.52" cy="334.81" r="2.35"/><circle cx="1635.21" cy="334.14" r="2.35"/><circle cx="1642.90" cy="333.47" r="2.35"/><circle cx="1650.58" cy="332.13" r="2.35"/><circle cx="1658.27" cy="331.46" r="2.35"/><circle cx="1665.96" cy="330.78" r="2.35"/><circle cx="1673.64" cy="330.11" r="2.35"/><circle cx="1681.33" cy="329.44" r="2.35"/><circle cx="1689.02" cy="328.77" r="2.35"/><circle cx="1696.70" cy="328.10" r="2.35"/><circle cx="1704.39" cy="327.43" r="2.35"/><circle cx="1712.08" cy="326.76" r="2.35"/><circle cx="1719.76" cy="325.41" r="2.35"/><circle cx="1727.45" cy="324.74" r="2.35"/><circle cx="1735.14" cy="324.07" r="2.35"/><circle cx="1742.82" cy="323.40" r="2.35"/><circle cx="1750.51" cy="322.73" r="2.35"/><circle cx="1758.20" cy="322.06" r="2.35"/><circle cx="1765.88" cy="321.39" r="2.35"/><circle cx="1773.57" cy="320.71" r="2.35"/><circle cx="1781.26" cy="320.04" r="2.35"/><circle cx="1788.94" cy="318.70" r="2.35"/><circle cx="1796.63" cy="318.03" r="2.35"/><circle cx="1804.32" cy="317.36" r="2.35"/><circle cx="1812.00" cy="316.69" r="2.35"/><circle cx="1819.69" cy="316.02" r="2.35"/><circle cx="1827.37" cy="315.34" r="2.35"/><circle cx="1835.06" cy="314.67" r="2.35"/><circle cx="1842.75" cy="314.00" r="2.35"/><circle cx="1850.43" cy="312.66" r="2.35"/><circle cx="1858.12" cy="311.99" r="2.35"/><circle cx="1865.81" cy="311.32" r="2.35"/><circle cx="1873.49" cy="310.64" r="2.35"/><circle cx="1881.18" cy="309.97" r="2.35"/><circle cx="1888.87" cy="309.30" r="2.35"/><circle cx="1896.55" cy="308.63" r="2.35"/><circle cx="1904.24" cy="307.96" r="2.35"/><circle cx="1911.93" cy="307.29" r="2.35"/><circle cx="1919.61" cy="305.95" r="2.35"/><circle cx="1927.30" cy="305.27" r="2.35"/></g>
<polyline fill="none" stroke="#b93d16" stroke-width="1.35" stroke-linejoin="round" points="1012.60,396.57 1020.29,395.23 1027.97,394.56 1035.66,393.89 1043.35,393.21 1051.03,391.87 1058.72,391.20 1066.41,390.53 1074.09,389.86 1081.78,388.52 1089.47,387.84 1097.15,387.17 1104.84,385.83 1112.53,385.16 1120.21,384.49 1127.90,383.82 1135.58,383.15 1143.27,382.47 1150.96,381.80 1158.64,380.46 1166.33,379.79 1174.02,379.12 1181.70,378.45 1189.39,377.77 1197.08,377.10 1204.76,376.43 1212.45,375.76 1220.14,374.42 1227.82,373.75 1235.51,373.08 1243.20,372.40 1250.88,371.73 1258.57,371.06 1266.26,370.39 1273.94,369.72 1281.63,369.05 1289.32,368.38 1297.00,367.71 1304.69,367.03 1312.38,366.36 1320.06,365.02 1327.75,364.35 1335.44,363.68 1343.12,363.01 1350.81,362.33 1358.49,361.66 1366.18,360.99 1373.87,360.32 1381.55,359.65 1389.24,358.98 1396.93,358.31 1404.61,357.64 1412.30,356.96 1419.99,356.29 1427.67,354.95 1435.36,354.28 1443.05,353.61 1450.73,352.94 1458.42,352.27 1466.11,350.92 1473.79,350.25 1481.48,349.58 1489.17,348.91 1496.85,348.24 1504.54,346.90 1512.23,346.22 1519.91,345.55 1527.60,344.88 1535.29,344.21 1542.97,342.87 1550.66,342.20 1558.35,341.52 1566.03,340.85 1573.72,339.51 1581.41,338.84 1589.09,338.17 1596.78,337.50 1604.46,336.83 1612.15,336.15 1619.84,335.48 1627.52,334.81 1635.21,334.14 1642.90,333.47 1650.58,332.13 1658.27,331.46 1665.96,330.78 1673.64,330.11 1681.33,329.44 1689.02,328.77 1696.70,328.10 1704.39,327.43 1712.08,326.76 1719.76,325.41 1727.45,324.74 1735.14,324.07 1742.82,323.40 1750.51,322.73 1758.20,322.06 1765.88,321.39 1773.57,320.71 1781.26,320.04 1788.94,318.70 1796.63,318.03 1804.32,317.36 1812.00,316.69 1819.69,316.02 1827.37,315.34 1835.06,314.67 1842.75,314.00 1850.43,312.66 1858.12,311.99 1865.81,311.32 1873.49,310.64 1881.18,309.97 1888.87,309.30 1896.55,308.63 1904.24,307.96 1911.93,307.29 1919.61,305.95 1927.30,305.27"/>
<g fill="#9a1300"><circle cx="1012.60" cy="396.57" r="1.65"/><circle cx="1020.29" cy="395.23" r="1.65"/><circle cx="1027.97" cy="394.56" r="1.65"/><circle cx="1035.66" cy="393.89" r="1.65"/><circle cx="1043.35" cy="393.21" r="1.65"/><circle cx="1051.03" cy="391.87" r="1.65"/><circle cx="1058.72" cy="391.20" r="1.65"/><circle cx="1066.41" cy="390.53" r="1.65"/><circle cx="1074.09" cy="389.86" r="1.65"/><circle cx="1081.78" cy="388.52" r="1.65"/><circle cx="1089.47" cy="387.84" r="1.65"/><circle cx="1097.15" cy="387.17" r="1.65"/><circle cx="1104.84" cy="385.83" r="1.65"/><circle cx="1112.53" cy="385.16" r="1.65"/><circle cx="1120.21" cy="384.49" r="1.65"/><circle cx="1127.90" cy="383.82" r="1.65"/><circle cx="1135.58" cy="383.15" r="1.65"/><circle cx="1143.27" cy="382.47" r="1.65"/><circle cx="1150.96" cy="381.80" r="1.65"/><circle cx="1158.64" cy="380.46" r="1.65"/><circle cx="1166.33" cy="379.79" r="1.65"/><circle cx="1174.02" cy="379.12" r="1.65"/><circle cx="1181.70" cy="378.45" r="1.65"/><circle cx="1189.39" cy="377.77" r="1.65"/><circle cx="1197.08" cy="377.10" r="1.65"/><circle cx="1204.76" cy="376.43" r="1.65"/><circle cx="1212.45" cy="375.76" r="1.65"/><circle cx="1220.14" cy="374.42" r="1.65"/><circle cx="1227.82" cy="373.75" r="1.65"/><circle cx="1235.51" cy="373.08" r="1.65"/><circle cx="1243.20" cy="372.40" r="1.65"/><circle cx="1250.88" cy="371.73" r="1.65"/><circle cx="1258.57" cy="371.06" r="1.65"/><circle cx="1266.26" cy="370.39" r="1.65"/><circle cx="1273.94" cy="369.72" r="1.65"/><circle cx="1281.63" cy="369.05" r="1.65"/><circle cx="1289.32" cy="368.38" r="1.65"/><circle cx="1297.00" cy="367.71" r="1.65"/><circle cx="1304.69" cy="367.03" r="1.65"/><circle cx="1312.38" cy="366.36" r="1.65"/><circle cx="1320.06" cy="365.02" r="1.65"/><circle cx="1327.75" cy="364.35" r="1.65"/><circle cx="1335.44" cy="363.68" r="1.65"/><circle cx="1343.12" cy="363.01" r="1.65"/><circle cx="1350.81" cy="362.33" r="1.65"/><circle cx="1358.49" cy="361.66" r="1.65"/><circle cx="1366.18" cy="360.99" r="1.65"/><circle cx="1373.87" cy="360.32" r="1.65"/><circle cx="1381.55" cy="359.65" r="1.65"/><circle cx="1389.24" cy="358.98" r="1.65"/><circle cx="1396.93" cy="358.31" r="1.65"/><circle cx="1404.61" cy="357.64" r="1.65"/><circle cx="1412.30" cy="356.96" r="1.65"/><circle cx="1419.99" cy="356.29" r="1.65"/><circle cx="1427.67" cy="354.95" r="1.65"/><circle cx="1435.36" cy="354.28" r="1.65"/><circle cx="1443.05" cy="353.61" r="1.65"/><circle cx="1450.73" cy="352.94" r="1.65"/><circle cx="1458.42" cy="352.27" r="1.65"/><circle cx="1466.11" cy="350.92" r="1.65"/><circle cx="1473.79" cy="350.25" r="1.65"/><circle cx="1481.48" cy="349.58" r="1.65"/><circle cx="1489.17" cy="348.91" r="1.65"/><circle cx="1496.85" cy="348.24" r="1.65"/><circle cx="1504.54" cy="346.90" r="1.65"/><circle cx="1512.23" cy="346.22" r="1.65"/><circle cx="1519.91" cy="345.55" r="1.65"/><circle cx="1527.60" cy="344.88" r="1.65"/><circle cx="1535.29" cy="344.21" r="1.65"/><circle cx="1542.97" cy="342.87" r="1.65"/><circle cx="1550.66" cy="342.20" r="1.65"/><circle cx="1558.35" cy="341.52" r="1.65"/><circle cx="1566.03" cy="340.85" r="1.65"/><circle cx="1573.72" cy="339.51" r="1.65"/><circle cx="1581.41" cy="338.84" r="1.65"/><circle cx="1589.09" cy="338.17" r="1.65"/><circle cx="1596.78" cy="337.50" r="1.65"/><circle cx="1604.46" cy="336.83" r="1.65"/><circle cx="1612.15" cy="336.15" r="1.65"/><circle cx="1619.84" cy="335.48" r="1.65"/><circle cx="1627.52" cy="334.81" r="1.65"/><circle cx="1635.21" cy="334.14" r="1.65"/><circle cx="1642.90" cy="333.47" r="1.65"/><circle cx="1650.58" cy="332.13" r="1.65"/><circle cx="1658.27" cy="331.46" r="1.65"/><circle cx="1665.96" cy="330.78" r="1.65"/><circle cx="1673.64" cy="330.11" r="1.65"/><circle cx="1681.33" cy="329.44" r="1.65"/><circle cx="1689.02" cy="328.77" r="1.65"/><circle cx="1696.70" cy="328.10" r="1.65"/><circle cx="1704.39" cy="327.43" r="1.65"/><circle cx="1712.08" cy="326.76" r="1.65"/><circle cx="1719.76" cy="325.41" r="1.65"/><circle cx="1727.45" cy="324.74" r="1.65"/><circle cx="1735.14" cy="324.07" r="1.65"/><circle cx="1742.82" cy="323.40" r="1.65"/><circle cx="1750.51" cy="322.73" r="1.65"/><circle cx="1758.20" cy="322.06" r="1.65"/><circle cx="1765.88" cy="321.39" r="1.65"/><circle cx="1773.57" cy="320.71" r="1.65"/><circle cx="1781.26" cy="320.04" r="1.65"/><circle cx="1788.94" cy="318.70" r="1.65"/><circle cx="1796.63" cy="318.03" r="1.65"/><circle cx="1804.32" cy="317.36" r="1.65"/><circle cx="1812.00" cy="316.69" r="1.65"/><circle cx="1819.69" cy="316.02" r="1.65"/><circle cx="1827.37" cy="315.34" r="1.65"/><circle cx="1835.06" cy="314.67" r="1.65"/><circle cx="1842.75" cy="314.00" r="1.65"/><circle cx="1850.43" cy="312.66" r="1.65"/><circle cx="1858.12" cy="311.99" r="1.65"/><circle cx="1865.81" cy="311.32" r="1.65"/><circle cx="1873.49" cy="310.64" r="1.65"/><circle cx="1881.18" cy="309.97" r="1.65"/><circle cx="1888.87" cy="309.30" r="1.65"/><circle cx="1896.55" cy="308.63" r="1.65"/><circle cx="1904.24" cy="307.96" r="1.65"/><circle cx="1911.93" cy="307.29" r="1.65"/><circle cx="1919.61" cy="305.95" r="1.65"/><circle cx="1927.30" cy="305.27" r="1.65"/></g>
<rect x="16.90" y="430.95" width="9.3" height="2.7" rx="1.3" fill="#73BF69"/><text x="31.70" y="435.20" font-size="8.3" fill="#ccccdc">AccountHashing</text><rect x="102.10" y="430.95" width="9.3" height="2.7" rx="1.3" fill="#F2CC0C"/><text x="116.30" y="435.20" font-size="8.3" fill="#ccccdc">Bodies</text><rect x="149.30" y="430.95" width="9.3" height="2.7" rx="1.3" fill="#8AB8FF"/><text x="163.80" y="435.20" font-size="8.3" fill="#ccccdc">Execution</text><rect x="208.30" y="430.95" width="9.3" height="2.7" rx="1.3" fill="#FF780A"/><text x="222.40" y="435.20" font-size="8.3" fill="#ccccdc">Finish</text><rect x="252.10" y="430.95" width="9.3" height="2.7" rx="1.3" fill="#F2495C"/><text x="266.60" y="435.20" font-size="8.3" fill="#ccccdc">Headers</text><rect x="306.00" y="430.95" width="9.3" height="2.7" rx="1.3" fill="#5794F2"/><text x="320.50" y="435.20" font-size="8.3" fill="#ccccdc">IndexAccountHistory</text><rect x="408.20" y="430.95" width="9.3" height="2.7" rx="1.3" fill="#B877D9"/><text x="422.60" y="435.20" font-size="8.3" fill="#ccccdc">IndexStorageHistory</text><rect x="509.00" y="430.95" width="9.3" height="2.7" rx="1.3" fill="#705DA0"/><text x="523.40" y="435.20" font-size="8.3" fill="#ccccdc">MerkleExecute</text><rect x="587.10" y="430.95" width="9.3" height="2.7" rx="1.3" fill="#37872D"/><text x="601.60" y="435.20" font-size="8.3" fill="#ccccdc">MerkleUnwind</text><rect x="663.60" y="430.95" width="9.3" height="2.7" rx="1.3" fill="#FADE2A"/><text x="678.10" y="435.20" font-size="8.3" fill="#ccccdc">SenderRecovery</text><rect x="748.90" y="430.95" width="9.3" height="2.7" rx="1.3" fill="#447EBC"/><text x="763.00" y="435.20" font-size="8.3" fill="#ccccdc">StorageHashing</text><rect x="832.10" y="430.95" width="9.3" height="2.7" rx="1.3" fill="#C15C17"/><text x="846.30" y="435.20" font-size="8.3" fill="#ccccdc">TotalDifficulty</text><rect x="16.90" y="446.05" width="9.3" height="2.7" rx="1.3" fill="#890F02"/><text x="31.70" y="450.30" font-size="8.3" fill="#ccccdc">TransactionLookup</text>
<rect x="988.20" y="430.95" width="9.3" height="2.7" rx="1.3" fill="#73BF69"/><text x="1003.00" y="435.20" font-size="8.3" fill="#ccccdc">AccountHashing</text><rect x="1073.40" y="430.95" width="9.3" height="2.7" rx="1.3" fill="#F2CC0C"/><text x="1087.60" y="435.20" font-size="8.3" fill="#ccccdc">Bodies</text><rect x="1120.60" y="430.95" width="9.3" height="2.7" rx="1.3" fill="#8AB8FF"/><text x="1135.10" y="435.20" font-size="8.3" fill="#ccccdc">Execution</text><rect x="1179.60" y="430.95" width="9.3" height="2.7" rx="1.3" fill="#FF780A"/><text x="1193.70" y="435.20" font-size="8.3" fill="#ccccdc">Finish</text><rect x="1223.40" y="430.95" width="9.3" height="2.7" rx="1.3" fill="#F2495C"/><text x="1237.90" y="435.20" font-size="8.3" fill="#ccccdc">Headers</text><rect x="1277.30" y="430.95" width="9.3" height="2.7" rx="1.3" fill="#5794F2"/><text x="1291.80" y="435.20" font-size="8.3" fill="#ccccdc">IndexAccountHistory</text><rect x="1379.50" y="430.95" width="9.3" height="2.7" rx="1.3" fill="#B877D9"/><text x="1393.90" y="435.20" font-size="8.3" fill="#ccccdc">IndexStorageHistory</text><rect x="1480.30" y="430.95" width="9.3" height="2.7" rx="1.3" fill="#705DA0"/><text x="1494.70" y="435.20" font-size="8.3" fill="#ccccdc">MerkleExecute</text><rect x="1558.40" y="430.95" width="9.3" height="2.7" rx="1.3" fill="#37872D"/><text x="1572.90" y="435.20" font-size="8.3" fill="#ccccdc">MerkleUnwind</text><rect x="1634.90" y="430.95" width="9.3" height="2.7" rx="1.3" fill="#FADE2A"/><text x="1649.40" y="435.20" font-size="8.3" fill="#ccccdc">SenderRecovery</text><rect x="1720.20" y="430.95" width="9.3" height="2.7" rx="1.3" fill="#447EBC"/><text x="1734.30" y="435.20" font-size="8.3" fill="#ccccdc">StorageHashing</text><rect x="1803.40" y="430.95" width="9.3" height="2.7" rx="1.3" fill="#C15C17"/><text x="1817.60" y="435.20" font-size="8.3" fill="#ccccdc">TotalDifficulty</text><rect x="988.20" y="446.05" width="9.3" height="2.7" rx="1.3" fill="#890F02"/><text x="1003.00" y="450.30" font-size="8.3" fill="#ccccdc">TransactionLookup</text>
<g stroke="#1e2127" stroke-width="1.6"><line x1="46.5" y1="536.20" x2="963.3" y2="536.20"/><line x1="46.5" y1="559.76" x2="963.3" y2="559.76"/><line x1="46.5" y1="583.32" x2="963.3" y2="583.32"/><line x1="46.5" y1="606.88" x2="963.3" y2="606.88"/><line x1="46.5" y1="630.44" x2="963.3" y2="630.44"/><line x1="46.5" y1="654.00" x2="963.3" y2="654.00"/></g><g stroke="#202328" stroke-width="1.0"><line x1="149.40" y1="523.00" x2="149.40" y2="656.70"/><line x1="301.40" y1="523.00" x2="301.40" y2="656.70"/><line x1="454.30" y1="523.00" x2="454.30" y2="656.70"/><line x1="606.40" y1="523.00" x2="606.40" y2="656.70"/><line x1="758.30" y1="523.00" x2="758.30" y2="656.70"/><line x1="910.30" y1="523.00" x2="910.30" y2="656.70"/></g>
<text x="42.9" y="538.10" font-size="8.3" fill="#ccccdc" text-anchor="end" style="letter-spacing:0">12.5 ms</text><text x="42.9" y="561.66" font-size="8.3" fill="#ccccdc" text-anchor="end" style="letter-spacing:0">10 ms</text><text x="42.9" y="585.22" font-size="8.3" fill="#ccccdc" text-anchor="end" style="letter-spacing:0">7.5 ms</text><text x="42.9" y="608.78" font-size="8.3" fill="#ccccdc" text-anchor="end" style="letter-spacing:0">5 ms</text><text x="42.9" y="632.34" font-size="8.3" fill="#ccccdc" text-anchor="end" style="letter-spacing:0">2.5 ms</text><text x="42.9" y="655.90" font-size="8.3" fill="#ccccdc" text-anchor="end" style="letter-spacing:0">0 s</text>
<text x="139.30" y="665.0" font-size="8.3" fill="#ccccdc" textLength="20.2" lengthAdjust="spacing" style="letter-spacing:0">16:55</text><text x="291.10" y="665.0" font-size="8.3" fill="#ccccdc" textLength="20.6" lengthAdjust="spacing" style="letter-spacing:0">17:00</text><text x="444.10" y="665.0" font-size="8.3" fill="#ccccdc" textLength="20.4" lengthAdjust="spacing" style="letter-spacing:0">17:05</text><text x="596.95" y="665.0" font-size="8.3" fill="#ccccdc" textLength="18.9" lengthAdjust="spacing" style="letter-spacing:0">17:10</text><text x="748.85" y="665.0" font-size="8.3" fill="#ccccdc" textLength="18.9" lengthAdjust="spacing" style="letter-spacing:0">17:15</text><text x="900.00" y="665.0" font-size="8.3" fill="#ccccdc" textLength="20.6" lengthAdjust="spacing" style="letter-spacing:0">17:20</text>
<g fill="#73bf69"><circle cx="58.33" cy="562.58" r="1.55"/><circle cx="65.30" cy="600.76" r="1.55"/><circle cx="73.33" cy="601.97" r="1.55"/><circle cx="81.21" cy="617.88" r="1.55"/><circle cx="88.33" cy="621.97" r="1.55"/><circle cx="96.21" cy="627.12" r="1.55"/><circle cx="103.33" cy="631.06" r="1.55"/><circle cx="111.21" cy="630.00" r="1.55"/><circle cx="119.24" cy="576.67" r="1.55"/><circle cx="126.21" cy="544.39" r="1.55"/><circle cx="134.24" cy="538.48" r="1.55"/><circle cx="141.21" cy="603.79" r="1.55"/><circle cx="149.24" cy="613.94" r="1.55"/><circle cx="157.27" cy="624.09" r="1.55"/><circle cx="164.24" cy="557.58" r="1.55"/><circle cx="172.27" cy="551.52" r="1.55"/><circle cx="180.30" cy="568.64" r="1.55"/><circle cx="187.27" cy="636.21" r="1.55"/><circle cx="195.15" cy="630.00" r="1.55"/><circle cx="202.27" cy="630.00" r="1.55"/><circle cx="210.30" cy="630.00" r="1.55"/><circle cx="218.33" cy="627.12" r="1.55"/><circle cx="225.30" cy="621.06" r="1.55"/><circle cx="233.33" cy="623.03" r="1.55"/><circle cx="240.30" cy="633.03" r="1.55"/><circle cx="248.33" cy="624.09" r="1.55"/><circle cx="256.36" cy="621.06" r="1.55"/><circle cx="263.33" cy="619.09" r="1.55"/><circle cx="271.36" cy="619.09" r="1.55"/><circle cx="278.33" cy="637.12" r="1.55"/><circle cx="286.36" cy="632.12" r="1.55"/><circle cx="294.24" cy="633.03" r="1.55"/><circle cx="301.36" cy="632.12" r="1.55"/><circle cx="309.24" cy="633.03" r="1.55"/><circle cx="317.27" cy="625.00" r="1.55"/><circle cx="324.24" cy="626.06" r="1.55"/><circle cx="332.27" cy="628.03" r="1.55"/><circle cx="339.24" cy="637.12" r="1.55"/><circle cx="347.27" cy="633.03" r="1.55"/><circle cx="355.30" cy="632.12" r="1.55"/><circle cx="362.27" cy="630.00" r="1.55"/><circle cx="370.30" cy="629.09" r="1.55"/><circle cx="377.27" cy="630.00" r="1.55"/><circle cx="385.30" cy="632.12" r="1.55"/><circle cx="393.33" cy="626.06" r="1.55"/><circle cx="400.30" cy="632.12" r="1.55"/><circle cx="408.33" cy="637.12" r="1.55"/><circle cx="415.30" cy="638.18" r="1.55"/><circle cx="423.33" cy="638.18" r="1.55"/><circle cx="431.36" cy="639.09" r="1.55"/><circle cx="438.33" cy="627.12" r="1.55"/><circle cx="446.36" cy="630.00" r="1.55"/><circle cx="454.39" cy="630.00" r="1.55"/><circle cx="461.36" cy="634.09" r="1.55"/><circle cx="469.39" cy="624.09" r="1.55"/><circle cx="476.36" cy="615.91" r="1.55"/><circle cx="484.39" cy="619.09" r="1.55"/><circle cx="492.42" cy="618.03" r="1.55"/><circle cx="499.39" cy="629.09" r="1.55"/><circle cx="507.42" cy="628.03" r="1.55"/><circle cx="514.39" cy="631.06" r="1.55"/><circle cx="522.27" cy="633.03" r="1.55"/><circle cx="530.30" cy="635.15" r="1.55"/><circle cx="537.27" cy="635.15" r="1.55"/><circle cx="545.30" cy="631.06" r="1.55"/><circle cx="553.33" cy="634.09" r="1.55"/><circle cx="560.30" cy="621.06" r="1.55"/><circle cx="568.33" cy="625.00" r="1.55"/><circle cx="575.30" cy="619.09" r="1.55"/><circle cx="583.18" cy="630.00" r="1.55"/><circle cx="591.21" cy="635.15" r="1.55"/><circle cx="598.18" cy="635.15" r="1.55"/><circle cx="606.21" cy="625.00" r="1.55"/><circle cx="613.33" cy="619.09" r="1.55"/><circle cx="621.21" cy="616.97" r="1.55"/><circle cx="629.24" cy="616.97" r="1.55"/><circle cx="636.21" cy="623.03" r="1.55"/><circle cx="644.24" cy="624.09" r="1.55"/><circle cx="651.21" cy="633.03" r="1.55"/><circle cx="659.24" cy="625.00" r="1.55"/><circle cx="667.27" cy="627.12" r="1.55"/><circle cx="674.24" cy="624.09" r="1.55"/><circle cx="682.27" cy="630.00" r="1.55"/><circle cx="690.30" cy="627.12" r="1.55"/><circle cx="697.27" cy="620.00" r="1.55"/><circle cx="705.30" cy="615.00" r="1.55"/><circle cx="712.27" cy="613.03" r="1.55"/><circle cx="720.30" cy="621.06" r="1.55"/><circle cx="728.33" cy="621.06" r="1.55"/><circle cx="735.30" cy="628.03" r="1.55"/><circle cx="743.33" cy="625.00" r="1.55"/><circle cx="750.30" cy="623.03" r="1.55"/><circle cx="758.33" cy="624.09" r="1.55"/><circle cx="766.36" cy="630.00" r="1.55"/><circle cx="773.33" cy="626.06" r="1.55"/><circle cx="781.36" cy="625.00" r="1.55"/><circle cx="789.39" cy="624.09" r="1.55"/><circle cx="796.36" cy="628.03" r="1.55"/><circle cx="804.24" cy="624.09" r="1.55"/><circle cx="811.36" cy="631.06" r="1.55"/><circle cx="819.39" cy="630.00" r="1.55"/><circle cx="827.27" cy="636.21" r="1.55"/><circle cx="834.39" cy="637.12" r="1.55"/><circle cx="842.27" cy="634.09" r="1.55"/><circle cx="849.39" cy="629.09" r="1.55"/><circle cx="857.27" cy="634.09" r="1.55"/><circle cx="865.30" cy="623.03" r="1.55"/><circle cx="872.27" cy="620.00" r="1.55"/><circle cx="880.30" cy="613.03" r="1.55"/><circle cx="887.27" cy="621.06" r="1.55"/><circle cx="895.30" cy="621.06" r="1.55"/><circle cx="903.33" cy="621.06" r="1.55"/><circle cx="910.30" cy="620.00" r="1.55"/><circle cx="918.33" cy="629.09" r="1.55"/><circle cx="926.36" cy="621.06" r="1.55"/><circle cx="933.33" cy="626.06" r="1.55"/><circle cx="941.36" cy="624.09" r="1.55"/><circle cx="948.33" cy="629.09" r="1.55"/><circle cx="956.36" cy="633.03" r="1.55"/></g>
<rect x="16.90" y="673.95" width="9.3" height="2.7" rx="1.3" fill="#73BF69"/><text x="31.70" y="678.20" font-size="8.3" fill="#ccccdc">Commit time</text>
<g stroke="#1e2127" stroke-width="1.6"><line x1="1033.3" y1="530.60" x2="1933.8" y2="530.60"/><line x1="1033.3" y1="546.80" x2="1933.8" y2="546.80"/><line x1="1033.3" y1="563.00" x2="1933.8" y2="563.00"/><line x1="1033.3" y1="579.20" x2="1933.8" y2="579.20"/><line x1="1033.3" y1="595.40" x2="1933.8" y2="595.40"/><line x1="1033.3" y1="611.60" x2="1933.8" y2="611.60"/><line x1="1033.3" y1="627.80" x2="1933.8" y2="627.80"/></g><g stroke="#202328" stroke-width="1.0"><line x1="1131.90" y1="523.30" x2="1131.90" y2="631.80"/><line x1="1281.90" y1="523.30" x2="1281.90" y2="631.80"/><line x1="1431.90" y1="523.30" x2="1431.90" y2="631.80"/><line x1="1581.90" y1="523.30" x2="1581.90" y2="631.80"/><line x1="1731.90" y1="523.30" x2="1731.90" y2="631.80"/><line x1="1881.90" y1="523.30" x2="1881.90" y2="631.80"/></g>
<text x="1028.3" y="532.50" font-size="8.3" fill="#ccccdc" text-anchor="end" style="letter-spacing:0">100%</text><text x="1028.3" y="548.70" font-size="8.3" fill="#ccccdc" text-anchor="end" style="letter-spacing:0">99.9%</text><text x="1028.3" y="564.90" font-size="8.3" fill="#ccccdc" text-anchor="end" style="letter-spacing:0">99%</text><text x="1028.3" y="581.10" font-size="8.3" fill="#ccccdc" text-anchor="end" style="letter-spacing:0">95%</text><text x="1028.3" y="597.30" font-size="8.3" fill="#ccccdc" text-anchor="end" style="letter-spacing:0">90%</text><text x="1028.3" y="613.50" font-size="8.3" fill="#ccccdc" text-anchor="end" style="letter-spacing:0">50%</text><text x="1028.3" y="629.70" font-size="8.3" fill="#ccccdc" text-anchor="end" style="letter-spacing:0">0%</text>
<text x="1121.80" y="648.0" font-size="8.3" fill="#ccccdc" textLength="20.2" lengthAdjust="spacing" style="letter-spacing:0">16:55</text><text x="1271.60" y="648.0" font-size="8.3" fill="#ccccdc" textLength="20.6" lengthAdjust="spacing" style="letter-spacing:0">17:00</text><text x="1421.70" y="648.0" font-size="8.3" fill="#ccccdc" textLength="20.4" lengthAdjust="spacing" style="letter-spacing:0">17:05</text><text x="1572.45" y="648.0" font-size="8.3" fill="#ccccdc" textLength="18.9" lengthAdjust="spacing" style="letter-spacing:0">17:10</text><text x="1722.45" y="648.0" font-size="8.3" fill="#ccccdc" textLength="18.9" lengthAdjust="spacing" style="letter-spacing:0">17:15</text><text x="1871.60" y="648.0" font-size="8.3" fill="#ccccdc" textLength="20.6" lengthAdjust="spacing" style="letter-spacing:0">17:20</text>
<text transform="translate(990.8 578) rotate(-90)" font-size="8.3" fill="#ccccdc" text-anchor="middle">Quantile</text>
<g fill="#fa6400"><rect x="1033.4" y="523.30" width="8.4" height="14.6" fill-opacity="0.6"/><rect x="1043.8" y="523.30" width="28.3" height="14.6" fill-opacity="0.68"/><rect x="1073.8" y="523.30" width="28.3" height="14.6" fill-opacity="0.95"/><rect x="1103.8" y="523.30" width="28.3" height="14.6" fill-opacity="0.7"/><rect x="1133.8" y="523.30" width="28.3" height="14.6" fill-opacity="0.92"/><rect x="1163.8" y="523.30" width="28.3" height="14.6" fill-opacity="0.65"/><rect x="1193.8" y="523.30" width="28.3" height="14.6" fill-opacity="0.62"/><rect x="1223.8" y="523.30" width="28.3" height="14.6" fill-opacity="0.55"/><rect x="1253.8" y="523.30" width="28.3" height="14.6" fill-opacity="0.52"/><rect x="1313.8" y="523.30" width="28.3" height="14.6" fill-opacity="0.62"/><rect x="1343.8" y="523.30" width="28.3" height="14.6" fill-opacity="0.42"/><rect x="1373.8" y="523.30" width="28.3" height="14.6" fill-opacity="0.62"/><rect x="1403.8" y="523.30" width="28.3" height="14.6" fill-opacity="0.48"/><rect x="1463.8" y="523.30" width="28.3" height="14.6" fill-opacity="0.6"/><rect x="1493.8" y="523.30" width="28.3" height="14.6" fill-opacity="0.64"/><rect x="1523.8" y="523.30" width="28.3" height="14.6" fill-opacity="0.5"/><rect x="1553.8" y="523.30" width="28.3" height="14.6" fill-opacity="0.72"/><rect x="1583.8" y="523.30" width="28.3" height="14.6" fill-opacity="0.66"/><rect x="1643.8" y="523.30" width="28.3" height="14.6" fill-opacity="0.66"/><rect x="1673.8" y="523.30" width="28.3" height="14.6" fill-opacity="0.66"/><rect x="1703.8" y="523.30" width="28.3" height="14.6" fill-opacity="0.5"/><rect x="1733.8" y="523.30" width="28.3" height="14.6" fill-opacity="0.66"/><rect x="1763.8" y="523.30" width="28.3" height="14.6" fill-opacity="0.74"/><rect x="1793.8" y="523.30" width="28.3" height="14.6" fill-opacity="0.66"/><rect x="1823.8" y="523.30" width="28.3" height="14.6" fill-opacity="0.56"/><rect x="1853.8" y="523.30" width="28.3" height="14.6" fill-opacity="0.42"/><rect x="1883.8" y="523.30" width="28.3" height="14.6" fill-opacity="0.56"/><rect x="1033.4" y="539.50" width="8.4" height="14.6" fill-opacity="0.9"/><rect x="1043.8" y="539.50" width="28.3" height="14.6" fill-opacity="0.68"/><rect x="1073.8" y="539.50" width="28.3" height="14.6" fill-opacity="0.55"/><rect x="1133.8" y="539.50" width="28.3" height="14.6" fill-opacity="1.0"/><rect x="1163.8" y="539.50" width="28.3" height="14.6" fill-opacity="0.68"/><rect x="1193.8" y="539.50" width="28.3" height="14.6" fill-opacity="0.74"/><rect x="1223.8" y="539.50" width="28.3" height="14.6" fill-opacity="0.58"/><rect x="1253.8" y="539.50" width="28.3" height="14.6" fill-opacity="0.68"/><rect x="1283.8" y="539.50" width="28.3" height="14.6" fill-opacity="0.72"/><rect x="1313.8" y="539.50" width="28.3" height="14.6" fill-opacity="0.72"/><rect x="1343.8" y="539.50" width="28.3" height="14.6" fill-opacity="0.72"/><rect x="1373.8" y="539.50" width="28.3" height="14.6" fill-opacity="0.72"/><rect x="1403.8" y="539.50" width="28.3" height="14.6" fill-opacity="0.7"/><rect x="1433.8" y="539.50" width="28.3" height="14.6" fill-opacity="0.7"/><rect x="1463.8" y="539.50" width="28.3" height="14.6" fill-opacity="0.76"/><rect x="1493.8" y="539.50" width="28.3" height="14.6" fill-opacity="0.66"/><rect x="1523.8" y="539.50" width="28.3" height="14.6" fill-opacity="0.8"/><rect x="1553.8" y="539.50" width="28.3" height="14.6" fill-opacity="0.64"/><rect x="1583.8" y="539.50" width="28.3" height="14.6" fill-opacity="0.76"/><rect x="1613.8" y="539.50" width="28.3" height="14.6" fill-opacity="0.78"/><rect x="1643.8" y="539.50" width="28.3" height="14.6" fill-opacity="0.7"/><rect x="1673.8" y="539.50" width="28.3" height="14.6" fill-opacity="0.66"/><rect x="1703.8" y="539.50" width="28.3" height="14.6" fill-opacity="0.76"/><rect x="1733.8" y="539.50" width="28.3" height="14.6" fill-opacity="0.76"/><rect x="1763.8" y="539.50" width="28.3" height="14.6" fill-opacity="0.72"/><rect x="1793.8" y="539.50" width="28.3" height="14.6" fill-opacity="0.58"/><rect x="1823.8" y="539.50" width="28.3" height="14.6" fill-opacity="0.7"/><rect x="1853.8" y="539.50" width="28.3" height="14.6" fill-opacity="0.68"/><rect x="1883.8" y="539.50" width="28.3" height="14.6" fill-opacity="0.72"/><rect x="1033.4" y="555.70" width="8.4" height="14.6" fill-opacity="0.9"/><rect x="1043.8" y="555.70" width="28.3" height="14.6" fill-opacity="0.68"/><rect x="1073.8" y="555.70" width="28.3" height="14.6" fill-opacity="0.55"/><rect x="1133.8" y="555.70" width="28.3" height="14.6" fill-opacity="1.0"/><rect x="1163.8" y="555.70" width="28.3" height="14.6" fill-opacity="0.68"/><rect x="1193.8" y="555.70" width="28.3" height="14.6" fill-opacity="0.74"/><rect x="1223.8" y="555.70" width="28.3" height="14.6" fill-opacity="0.58"/><rect x="1253.8" y="555.70" width="28.3" height="14.6" fill-opacity="0.68"/><rect x="1283.8" y="555.70" width="28.3" height="14.6" fill-opacity="0.72"/><rect x="1313.8" y="555.70" width="28.3" height="14.6" fill-opacity="0.72"/><rect x="1343.8" y="555.70" width="28.3" height="14.6" fill-opacity="0.72"/><rect x="1373.8" y="555.70" width="28.3" height="14.6" fill-opacity="0.72"/><rect x="1403.8" y="555.70" width="28.3" height="14.6" fill-opacity="0.7"/><rect x="1433.8" y="555.70" width="28.3" height="14.6" fill-opacity="0.7"/><rect x="1463.8" y="555.70" width="28.3" height="14.6" fill-opacity="0.76"/><rect x="1493.8" y="555.70" width="28.3" height="14.6" fill-opacity="0.66"/><rect x="1523.8" y="555.70" width="28.3" height="14.6" fill-opacity="0.8"/><rect x="1553.8" y="555.70" width="28.3" height="14.6" fill-opacity="0.64"/><rect x="1583.8" y="555.70" width="28.3" height="14.6" fill-opacity="0.76"/><rect x="1613.8" y="555.70" width="28.3" height="14.6" fill-opacity="0.78"/><rect x="1643.8" y="555.70" width="28.3" height="14.6" fill-opacity="0.7"/><rect x="1673.8" y="555.70" width="28.3" height="14.6" fill-opacity="0.66"/><rect x="1703.8" y="555.70" width="28.3" height="14.6" fill-opacity="0.76"/><rect x="1733.8" y="555.70" width="28.3" height="14.6" fill-opacity="0.76"/><rect x="1763.8" y="555.70" width="28.3" height="14.6" fill-opacity="0.72"/><rect x="1793.8" y="555.70" width="28.3" height="14.6" fill-opacity="0.58"/><rect x="1823.8" y="555.70" width="28.3" height="14.6" fill-opacity="0.7"/><rect x="1853.8" y="555.70" width="28.3" height="14.6" fill-opacity="0.68"/><rect x="1883.8" y="555.70" width="28.3" height="14.6" fill-opacity="0.72"/><rect x="1033.4" y="571.90" width="8.4" height="14.6" fill-opacity="0.9"/><rect x="1043.8" y="571.90" width="28.3" height="14.6" fill-opacity="0.68"/><rect x="1073.8" y="571.90" width="28.3" height="14.6" fill-opacity="0.55"/><rect x="1133.8" y="571.90" width="28.3" height="14.6" fill-opacity="1.0"/><rect x="1163.8" y="571.90" width="28.3" height="14.6" fill-opacity="0.68"/><rect x="1193.8" y="571.90" width="28.3" height="14.6" fill-opacity="0.74"/><rect x="1223.8" y="571.90" width="28.3" height="14.6" fill-opacity="0.58"/><rect x="1253.8" y="571.90" width="28.3" height="14.6" fill-opacity="0.68"/><rect x="1283.8" y="571.90" width="28.3" height="14.6" fill-opacity="0.72"/><rect x="1313.8" y="571.90" width="28.3" height="14.6" fill-opacity="0.72"/><rect x="1343.8" y="571.90" width="28.3" height="14.6" fill-opacity="0.72"/><rect x="1373.8" y="571.90" width="28.3" height="14.6" fill-opacity="0.72"/><rect x="1403.8" y="571.90" width="28.3" height="14.6" fill-opacity="0.7"/><rect x="1433.8" y="571.90" width="28.3" height="14.6" fill-opacity="0.7"/><rect x="1463.8" y="571.90" width="28.3" height="14.6" fill-opacity="0.76"/><rect x="1493.8" y="571.90" width="28.3" height="14.6" fill-opacity="0.66"/><rect x="1523.8" y="571.90" width="28.3" height="14.6" fill-opacity="0.8"/><rect x="1553.8" y="571.90" width="28.3" height="14.6" fill-opacity="0.64"/><rect x="1583.8" y="571.90" width="28.3" height="14.6" fill-opacity="0.76"/><rect x="1613.8" y="571.90" width="28.3" height="14.6" fill-opacity="0.78"/><rect x="1643.8" y="571.90" width="28.3" height="14.6" fill-opacity="0.7"/><rect x="1673.8" y="571.90" width="28.3" height="14.6" fill-opacity="0.66"/><rect x="1703.8" y="571.90" width="28.3" height="14.6" fill-opacity="0.76"/><rect x="1733.8" y="571.90" width="28.3" height="14.6" fill-opacity="0.76"/><rect x="1763.8" y="571.90" width="28.3" height="14.6" fill-opacity="0.72"/><rect x="1793.8" y="571.90" width="28.3" height="14.6" fill-opacity="0.58"/><rect x="1823.8" y="571.90" width="28.3" height="14.6" fill-opacity="0.7"/><rect x="1853.8" y="571.90" width="28.3" height="14.6" fill-opacity="0.68"/><rect x="1883.8" y="571.90" width="28.3" height="14.6" fill-opacity="0.72"/><rect x="1033.4" y="588.10" width="8.4" height="14.6" fill-opacity="0.9"/><rect x="1043.8" y="588.10" width="28.3" height="14.6" fill-opacity="0.85"/><rect x="1073.8" y="588.10" width="28.3" height="14.6" fill-opacity="0.62"/><rect x="1133.8" y="588.10" width="28.3" height="14.6" fill-opacity="1.0"/><rect x="1163.8" y="588.10" width="28.3" height="14.6" fill-opacity="0.68"/><rect x="1193.8" y="588.10" width="28.3" height="14.6" fill-opacity="0.74"/><rect x="1223.8" y="588.10" width="28.3" height="14.6" fill-opacity="0.58"/><rect x="1253.8" y="588.10" width="28.3" height="14.6" fill-opacity="0.68"/><rect x="1283.8" y="588.10" width="28.3" height="14.6" fill-opacity="0.72"/><rect x="1313.8" y="588.10" width="28.3" height="14.6" fill-opacity="0.72"/><rect x="1343.8" y="588.10" width="28.3" height="14.6" fill-opacity="0.72"/><rect x="1373.8" y="588.10" width="28.3" height="14.6" fill-opacity="0.72"/><rect x="1403.8" y="588.10" width="28.3" height="14.6" fill-opacity="0.7"/><rect x="1433.8" y="588.10" width="28.3" height="14.6" fill-opacity="0.7"/><rect x="1463.8" y="588.10" width="28.3" height="14.6" fill-opacity="0.76"/><rect x="1493.8" y="588.10" width="28.3" height="14.6" fill-opacity="0.66"/><rect x="1523.8" y="588.10" width="28.3" height="14.6" fill-opacity="0.8"/><rect x="1553.8" y="588.10" width="28.3" height="14.6" fill-opacity="0.64"/><rect x="1583.8" y="588.10" width="28.3" height="14.6" fill-opacity="0.86"/><rect x="1613.8" y="588.10" width="28.3" height="14.6" fill-opacity="0.78"/><rect x="1643.8" y="588.10" width="28.3" height="14.6" fill-opacity="0.7"/><rect x="1673.8" y="588.10" width="28.3" height="14.6" fill-opacity="0.66"/><rect x="1703.8" y="588.10" width="28.3" height="14.6" fill-opacity="0.76"/><rect x="1733.8" y="588.10" width="28.3" height="14.6" fill-opacity="0.76"/><rect x="1763.8" y="588.10" width="28.3" height="14.6" fill-opacity="0.72"/><rect x="1793.8" y="588.10" width="28.3" height="14.6" fill-opacity="0.64"/><rect x="1823.8" y="588.10" width="28.3" height="14.6" fill-opacity="0.7"/><rect x="1853.8" y="588.10" width="28.3" height="14.6" fill-opacity="0.78"/><rect x="1883.8" y="588.10" width="28.3" height="14.6" fill-opacity="0.72"/><rect x="1033.4" y="604.30" width="8.4" height="14.6" fill-opacity="0.62"/><rect x="1043.8" y="604.30" width="28.3" height="14.6" fill-opacity="0.5"/><rect x="1103.8" y="604.30" width="28.3" height="14.6" fill-opacity="0.76"/><rect x="1133.8" y="604.30" width="28.3" height="14.6" fill-opacity="0.62"/><rect x="1163.8" y="604.30" width="28.3" height="14.6" fill-opacity="0.45"/><rect x="1253.8" y="604.30" width="28.3" height="14.6" fill-opacity="0.45"/><rect x="1373.8" y="604.30" width="28.3" height="14.6" fill-opacity="0.45"/><rect x="1403.8" y="604.30" width="28.3" height="14.6" fill-opacity="0.45"/><rect x="1493.8" y="604.30" width="28.3" height="14.6" fill-opacity="0.45"/><rect x="1583.8" y="604.30" width="28.3" height="14.6" fill-opacity="0.55"/><rect x="1853.8" y="604.30" width="28.3" height="14.6" fill-opacity="0.48"/></g>
<defs><linearGradient id="hl" x1="0" y1="0" x2="1" y2="0"><stop offset="0" stop-color="#fa6400" stop-opacity="0.03"/><stop offset="0.08" stop-color="#fa6400" stop-opacity="0.32"/><stop offset="0.22" stop-color="#fa6400" stop-opacity="0.62"/><stop offset="0.5" stop-color="#fa6400" stop-opacity="0.86"/><stop offset="1" stop-color="#fa6400" stop-opacity="1"/></linearGradient></defs>
<rect x="1003.8" y="657.0" width="198.3" height="5.6" fill="url(#hl)"/>
<text x="1002.5" y="671.2" font-size="7.4" fill="#ccccdc">0 s</text>
<text x="1202.3" y="671.2" font-size="7.4" fill="#ccccdc" text-anchor="end">99.8 ms</text>
<defs><radialGradient id="pg0" gradientUnits="userSpaceOnUse" cx="419.0" cy="801.9" r="71.6"><stop offset="0" stop-color="#153b14"/><stop offset="1" stop-color="#2c6120"/></radialGradient><radialGradient id="pg1" gradientUnits="userSpaceOnUse" cx="419.0" cy="801.9" r="71.6"><stop offset="0" stop-color="#020e1e"/><stop offset="1" stop-color="#062e4d"/></radialGradient><radialGradient id="pg2" gradientUnits="userSpaceOnUse" cx="419.0" cy="801.9" r="71.6"><stop offset="0" stop-color="#7356c6"/><stop offset="1" stop-color="#877cd3"/></radialGradient><radialGradient id="pg3" gradientUnits="userSpaceOnUse" cx="419.0" cy="801.9" r="71.6"><stop offset="0" stop-color="#246cff"/><stop offset="1" stop-color="#57a4ff"/></radialGradient><radialGradient id="pg4" gradientUnits="userSpaceOnUse" cx="419.0" cy="801.9" r="71.6"><stop offset="0" stop-color="#240601"/><stop offset="1" stop-color="#570401"/></radialGradient><radialGradient id="pg5" gradientUnits="userSpaceOnUse" cx="419.0" cy="801.9" r="71.6"><stop offset="0" stop-color="#9333b7"/><stop offset="1" stop-color="#9b4fce"/></radialGradient><radialGradient id="pg6" gradientUnits="userSpaceOnUse" cx="419.0" cy="801.9" r="71.6"><stop offset="0" stop-color="#1050d3"/><stop offset="1" stop-color="#2883ee"/></radialGradient><radialGradient id="pg7" gradientUnits="userSpaceOnUse" cx="419.0" cy="801.9" r="71.6"><stop offset="0" stop-color="#355b2e"/><stop offset="1" stop-color="#517c40"/></radialGradient><radialGradient id="pg8" gradientUnits="userSpaceOnUse" cx="419.0" cy="801.9" r="71.6"><stop offset="0" stop-color="#294771"/><stop offset="1" stop-color="#366b97"/></radialGradient><radialGradient id="pg9" gradientUnits="userSpaceOnUse" cx="419.0" cy="801.9" r="71.6"><stop offset="0" stop-color="#1e0819"/><stop offset="1" stop-color="#451442"/></radialGradient><radialGradient id="pg10" gradientUnits="userSpaceOnUse" cx="419.0" cy="801.9" r="71.6"><stop offset="0" stop-color="#46385f"/><stop offset="1" stop-color="#564a80"/></radialGradient><radialGradient id="pg11" gradientUnits="userSpaceOnUse" cx="419.0" cy="801.9" r="71.6"><stop offset="0" stop-color="#856c08"/><stop offset="1" stop-color="#b57d0b"/></radialGradient><radialGradient id="pg12" gradientUnits="userSpaceOnUse" cx="419.0" cy="801.9" r="71.6"><stop offset="0" stop-color="#74bc64"/><stop offset="1" stop-color="#9dcc87"/></radialGradient><radialGradient id="pg13" gradientUnits="userSpaceOnUse" cx="419.0" cy="801.9" r="71.6"><stop offset="0" stop-color="#66370c"/><stop offset="1" stop-color="#933e12"/></radialGradient><radialGradient id="pg14" gradientUnits="userSpaceOnUse" cx="419.0" cy="801.9" r="71.6"><stop offset="0" stop-color="#ce59c0"/><stop offset="1" stop-color="#d881d9"/></radialGradient><radialGradient id="pg15" gradientUnits="userSpaceOnUse" cx="419.0" cy="801.9" r="71.6"><stop offset="0" stop-color="#f48c2e"/><stop offset="1" stop-color="#f6925f"/></radialGradient><radialGradient id="pg16" gradientUnits="userSpaceOnUse" cx="419.0" cy="801.9" r="71.6"><stop offset="0" stop-color="#3e883a"/><stop offset="1" stop-color="#5bac49"/></radialGradient><radialGradient id="pg17" gradientUnits="userSpaceOnUse" cx="419.0" cy="801.9" r="71.6"><stop offset="0" stop-color="#918307"/><stop offset="1" stop-color="#c1970a"/></radialGradient><radialGradient id="pg18" gradientUnits="userSpaceOnUse" cx="419.0" cy="801.9" r="71.6"><stop offset="0" stop-color="#2a1f36"/><stop offset="1" stop-color="#3e3157"/></radialGradient><radialGradient id="pg19" gradientUnits="userSpaceOnUse" cx="419.0" cy="801.9" r="71.6"><stop offset="0" stop-color="#eabb3c"/><stop offset="1" stop-color="#efb96a"/></radialGradient><radialGradient id="pg20" gradientUnits="userSpaceOnUse" cx="419.0" cy="801.9" r="71.6"><stop offset="0" stop-color="#e74236"/><stop offset="1" stop-color="#ed636d"/></radialGradient><radialGradient id="pg21" gradientUnits="userSpaceOnUse" cx="419.0" cy="801.9" r="71.6"><stop offset="0" stop-color="#3a7dba"/><stop offset="1" stop-color="#5ba6cc"/></radialGradient></defs><g stroke="#181b1f" stroke-width="0.9" stroke-linejoin="round"><path d="M419.0 801.9 L419.00 730.30 A71.6 71.6 0 0 1 477.44 843.27 Z" fill="url(#pg0)"/><path d="M419.0 801.9 L477.44 843.27 A71.6 71.6 0 0 1 351.18 824.86 Z" fill="url(#pg1)"/><path d="M419.0 801.9 L351.18 824.86 A71.6 71.6 0 0 1 355.78 768.29 Z" fill="url(#pg2)"/><path d="M419.0 801.9 L355.78 768.29 A71.6 71.6 0 0 1 370.17 749.54 Z" fill="url(#pg3)"/><path d="M419.0 801.9 L370.17 749.54 A71.6 71.6 0 0 1 387.61 737.55 Z" fill="url(#pg4)"/><path d="M419.0 801.9 L387.61 737.55 A71.6 71.6 0 0 1 391.95 735.61 Z" fill="url(#pg5)"/><path d="M419.0 801.9 L391.95 735.61 A71.6 71.6 0 0 1 397.23 733.69 Z" fill="url(#pg6)"/><path d="M419.0 801.9 L397.23 733.69 A71.6 71.6 0 0 1 401.19 732.55 Z" fill="url(#pg7)"/><path d="M419.0 801.9 L401.19 732.55 A71.6 71.6 0 0 1 403.75 731.94 Z" fill="url(#pg8)"/><path d="M419.0 801.9 L403.75 731.94 A71.6 71.6 0 0 1 405.83 731.52 Z" fill="url(#pg9)"/><path d="M419.0 801.9 L405.83 731.52 A71.6 71.6 0 0 1 407.80 731.18 Z" fill="url(#pg10)"/><path d="M419.0 801.9 L407.80 731.18 A71.6 71.6 0 0 1 409.78 730.90 Z" fill="url(#pg11)"/><path d="M419.0 801.9 L409.78 730.90 A71.6 71.6 0 0 1 411.52 730.69 Z" fill="url(#pg12)"/><path d="M419.0 801.9 L411.52 730.69 A71.6 71.6 0 0 1 413.26 730.53 Z" fill="url(#pg13)"/><path d="M419.0 801.9 L413.26 730.53 A71.6 71.6 0 0 1 414.63 730.43 Z" fill="url(#pg14)"/><path d="M419.0 801.9 L414.63 730.43 A71.6 71.6 0 0 1 415.88 730.37 Z" fill="url(#pg15)"/><path d="M419.0 801.9 L415.88 730.37 A71.6 71.6 0 0 1 416.75 730.34 Z" fill="url(#pg16)"/><path d="M419.0 801.9 L416.75 730.34 A71.6 71.6 0 0 1 417.50 730.32 Z" fill="url(#pg17)"/><path d="M419.0 801.9 L417.50 730.32 A71.6 71.6 0 0 1 418.00 730.31 Z" fill="url(#pg18)"/><path d="M419.0 801.9 L418.00 730.31 A71.6 71.6 0 0 1 418.38 730.30 Z" fill="url(#pg19)"/><path d="M419.0 801.9 L418.38 730.30 A71.6 71.6 0 0 1 418.75 730.30 Z" fill="url(#pg20)"/><path d="M419.0 801.9 L418.75 730.30 A71.6 71.6 0 0 1 419.00 730.30 Z" fill="url(#pg21)"/></g>
<text x="455.8" y="792.3" font-size="8.6" fill="#e4e4ee" text-anchor="middle">HashedAccount</text>
<text x="413.3" y="852.2" font-size="8.6" fill="#e4e4ee" text-anchor="middle">PlainAccountState</text>
<text x="377.3" y="808.2" font-size="8.6" fill="#e4e4ee" text-anchor="middle">Transactions</text>
<text x="386.0" y="786.3" font-size="8.6" fill="#e4e4ee" text-anchor="middle">AccountsTrie</text>
<defs><clipPath id="lgc"><rect x="815" y="718.3" width="158" height="165.3"/></clipPath></defs><g clip-path="url(#lgc)">
<rect x="827.7" y="717.55" width="9.5" height="2.7" rx="1.3" fill="#C15C17"/>
<text x="842.9" y="721.80" font-size="8.3" fill="#ccccdc">HeaderTD</text>
<text x="962.9" y="721.80" font-size="8.3" fill="#ccccdc" text-anchor="end">184 KiB</text>
<line x1="822.6" y1="727.10" x2="968" y2="727.10" stroke="#26292f" stroke-width="0.8"/>
<rect x="827.7" y="733.75" width="9.5" height="2.7" rx="1.3" fill="#E5A8E2"/>
<text x="842.9" y="738.00" font-size="8.3" fill="#ccccdc">TransactionBlock</text>
<text x="962.9" y="738.00" font-size="8.3" fill="#ccccdc" text-anchor="end">120 KiB</text>
<line x1="822.6" y1="743.30" x2="968" y2="743.30" stroke="#26292f" stroke-width="0.8"/>
<rect x="827.7" y="749.95" width="9.5" height="2.7" rx="1.3" fill="#F9BA8F"/>
<text x="842.9" y="754.20" font-size="8.3" fill="#ccccdc">StoragesTrie</text>
<text x="962.9" y="754.20" font-size="8.3" fill="#ccccdc" text-anchor="end">116 KiB</text>
<line x1="822.6" y1="759.50" x2="968" y2="759.50" stroke="#26292f" stroke-width="0.8"/>
<rect x="827.7" y="766.15" width="9.5" height="2.7" rx="1.3" fill="#73BF69"/>
<text x="842.9" y="770.40" font-size="8.3" fill="#ccccdc">AccountChangeSet</text>
<text x="962.9" y="770.40" font-size="8.3" fill="#ccccdc" text-anchor="end">44 KiB</text>
<line x1="822.6" y1="775.70" x2="968" y2="775.70" stroke="#26292f" stroke-width="0.8"/>
<rect x="827.7" y="782.35" width="9.5" height="2.7" rx="1.3" fill="#F2CC0C"/>
<text x="842.9" y="786.60" font-size="8.3" fill="#ccccdc">AccountHistory</text>
<text x="962.9" y="786.60" font-size="8.3" fill="#ccccdc" text-anchor="end">28 KiB</text>
<line x1="822.6" y1="791.90" x2="968" y2="791.90" stroke="#26292f" stroke-width="0.8"/>
<rect x="827.7" y="798.55" width="9.5" height="2.7" rx="1.3" fill="#584477"/>
<text x="842.9" y="802.80" font-size="8.3" fill="#ccccdc">PruneCheckpoints</text>
<text x="962.9" y="802.80" font-size="8.3" fill="#ccccdc" text-anchor="end">4 KiB</text>
<line x1="822.6" y1="808.10" x2="968" y2="808.10" stroke="#26292f" stroke-width="0.8"/>
<rect x="827.7" y="814.75" width="9.5" height="2.7" rx="1.3" fill="#F4D598"/>
<text x="842.9" y="819.00" font-size="8.3" fill="#ccccdc">StorageChangeSet</text>
<text x="962.9" y="819.00" font-size="8.3" fill="#ccccdc" text-anchor="end">4 KiB</text>
<line x1="822.6" y1="824.30" x2="968" y2="824.30" stroke="#26292f" stroke-width="0.8"/>
<rect x="827.7" y="830.95" width="9.5" height="2.7" rx="1.3" fill="#F29191"/>
<text x="842.9" y="835.20" font-size="8.3" fill="#ccccdc">SyncStage</text>
<text x="962.9" y="835.20" font-size="8.3" fill="#ccccdc" text-anchor="end">4 KiB</text>
<line x1="822.6" y1="840.50" x2="968" y2="840.50" stroke="#26292f" stroke-width="0.8"/>
<rect x="827.7" y="847.15" width="9.5" height="2.7" rx="1.3" fill="#82B5D8"/>
<text x="842.9" y="851.40" font-size="8.3" fill="#ccccdc">SyncStageProgress</text>
<text x="962.9" y="851.40" font-size="8.3" fill="#ccccdc" text-anchor="end">4 KiB</text>
<line x1="822.6" y1="856.70" x2="968" y2="856.70" stroke="#26292f" stroke-width="0.8"/>
<rect x="827.7" y="863.35" width="9.5" height="2.7" rx="1.3" fill="#F2495C"/>
<text x="842.9" y="867.60" font-size="8.3" fill="#ccccdc">BlockOmmers</text>
<text x="962.9" y="867.60" font-size="8.3" fill="#ccccdc" text-anchor="end">0 B</text>
<line x1="822.6" y1="872.90" x2="968" y2="872.90" stroke="#26292f" stroke-width="0.8"/>
<rect x="827.7" y="879.55" width="9.5" height="2.7" rx="1.3" fill="#70DBED"/>
<text x="842.9" y="883.80" font-size="8.3" fill="#ccccdc">StorageHistory</text>
<text x="962.9" y="883.80" font-size="8.3" fill="#ccccdc" text-anchor="end">0 B</text>
<line x1="822.6" y1="889.10" x2="968" y2="889.10" stroke="#26292f" stroke-width="0.8"/>
</g>
<g stroke="#1e2127" stroke-width="1.6"><line x1="1016.8" y1="738.30" x2="1934.8" y2="738.30"/><line x1="1016.8" y1="769.20" x2="1934.8" y2="769.20"/><line x1="1016.8" y1="799.70" x2="1934.8" y2="799.70"/><line x1="1016.8" y1="830.30" x2="1934.8" y2="830.30"/></g><g stroke="#202328" stroke-width="1.0"><line x1="1120.20" y1="725.40" x2="1120.20" y2="859.50"/><line x1="1272.40" y1="725.40" x2="1272.40" y2="859.50"/><line x1="1425.50" y1="725.40" x2="1425.50" y2="859.50"/><line x1="1577.40" y1="725.40" x2="1577.40" y2="859.50"/><line x1="1729.50" y1="725.40" x2="1729.50" y2="859.50"/><line x1="1881.50" y1="725.40" x2="1881.50" y2="859.50"/></g>
<text x="1014.2" y="740.20" font-size="8.3" fill="#ccccdc" text-anchor="end" style="letter-spacing:0">114 MiB</text><text x="1014.2" y="771.10" font-size="8.3" fill="#ccccdc" text-anchor="end" style="letter-spacing:0">114 MiB</text><text x="1014.2" y="801.60" font-size="8.3" fill="#ccccdc" text-anchor="end" style="letter-spacing:0">113 MiB</text><text x="1014.2" y="832.20" font-size="8.3" fill="#ccccdc" text-anchor="end" style="letter-spacing:0">113 MiB</text>
<text x="1110.10" y="868.0" font-size="8.3" fill="#ccccdc" textLength="20.2" lengthAdjust="spacing" style="letter-spacing:0">16:55</text><text x="1262.10" y="868.0" font-size="8.3" fill="#ccccdc" textLength="20.6" lengthAdjust="spacing" style="letter-spacing:0">17:00</text><text x="1415.30" y="868.0" font-size="8.3" fill="#ccccdc" textLength="20.4" lengthAdjust="spacing" style="letter-spacing:0">17:05</text><text x="1567.95" y="868.0" font-size="8.3" fill="#ccccdc" textLength="18.9" lengthAdjust="spacing" style="letter-spacing:0">17:10</text><text x="1720.05" y="868.0" font-size="8.3" fill="#ccccdc" textLength="18.9" lengthAdjust="spacing" style="letter-spacing:0">17:15</text><text x="1871.20" y="868.0" font-size="8.3" fill="#ccccdc" textLength="20.6" lengthAdjust="spacing" style="letter-spacing:0">17:20</text>
<polyline fill="none" stroke="#73bf69" stroke-width="0.8" stroke-linejoin="round" points="1021.52,738.33 1029.13,738.33 1036.74,737.27 1044.36,736.21 1051.97,756.36 1059.58,756.36 1067.20,756.36 1074.81,756.36 1082.43,778.33 1090.04,776.52 1097.65,776.52 1105.27,776.52 1112.88,796.52 1120.50,796.52 1128.11,795.45 1135.72,795.45 1143.34,794.55 1150.95,817.58 1158.57,817.58 1166.18,816.52 1173.79,815.61 1181.41,815.61 1189.02,835.91 1196.64,835.91 1204.25,835.91 1211.86,835.91 1219.48,843.94 1227.09,842.88 1234.71,841.82 1242.32,841.82 1249.93,841.82 1257.55,840.91 1265.16,840.91 1272.78,838.79 1280.39,837.88 1288.00,837.88 1295.62,836.82 1303.23,834.70 1310.85,834.70 1318.46,834.70 1326.07,833.79 1333.69,833.79 1341.30,833.79 1348.92,833.79 1356.53,832.73 1364.14,831.82 1371.76,831.82 1379.37,830.76 1386.98,828.79 1394.60,828.79 1402.21,827.73 1409.83,826.67 1417.44,825.76 1425.05,825.76 1432.67,824.70 1440.28,824.70 1447.90,822.73 1455.51,822.73 1463.12,820.61 1470.74,817.58 1478.35,813.64 1485.97,812.58 1493.58,811.52 1501.19,811.52 1508.81,809.55 1516.42,808.48 1524.04,808.48 1531.65,807.58 1539.26,806.52 1546.88,806.52 1554.49,802.58 1562.11,802.58 1569.72,800.45 1577.33,798.48 1584.95,797.58 1592.56,797.58 1600.18,797.58 1607.79,797.58 1615.40,796.52 1623.02,796.52 1630.63,795.45 1638.25,795.45 1645.86,795.45 1653.47,795.45 1661.09,793.48 1668.70,791.52 1676.32,790.45 1683.93,789.55 1691.54,789.55 1699.16,790.45 1706.77,789.55 1714.39,789.55 1722.00,788.48 1729.61,788.48 1737.23,788.48 1744.84,788.48 1752.45,787.42 1760.07,786.52 1767.68,786.52 1775.30,785.45 1782.91,785.45 1790.52,785.45 1798.14,785.45 1805.75,783.48 1813.37,782.42 1820.98,782.42 1828.59,782.42 1836.21,782.42 1843.82,781.52 1851.44,780.45 1859.05,779.39 1866.66,779.39 1874.28,778.48 1881.89,778.48 1889.51,778.48 1897.12,777.42 1904.73,776.52 1912.35,776.52 1919.96,776.52 1927.58,775.45"/>
<g fill="#73bf69"><circle cx="1021.52" cy="738.33" r="1.6"/><circle cx="1029.13" cy="738.33" r="1.6"/><circle cx="1036.74" cy="737.27" r="1.6"/><circle cx="1044.36" cy="736.21" r="1.6"/><circle cx="1051.97" cy="756.36" r="1.6"/><circle cx="1059.58" cy="756.36" r="1.6"/><circle cx="1067.20" cy="756.36" r="1.6"/><circle cx="1074.81" cy="756.36" r="1.6"/><circle cx="1082.43" cy="778.33" r="1.6"/><circle cx="1090.04" cy="776.52" r="1.6"/><circle cx="1097.65" cy="776.52" r="1.6"/><circle cx="1105.27" cy="776.52" r="1.6"/><circle cx="1112.88" cy="796.52" r="1.6"/><circle cx="1120.50" cy="796.52" r="1.6"/><circle cx="1128.11" cy="795.45" r="1.6"/><circle cx="1135.72" cy="795.45" r="1.6"/><circle cx="1143.34" cy="794.55" r="1.6"/><circle cx="1150.95" cy="817.58" r="1.6"/><circle cx="1158.57" cy="817.58" r="1.6"/><circle cx="1166.18" cy="816.52" r="1.6"/><circle cx="1173.79" cy="815.61" r="1.6"/><circle cx="1181.41" cy="815.61" r="1.6"/><circle cx="1189.02" cy="835.91" r="1.6"/><circle cx="1196.64" cy="835.91" r="1.6"/><circle cx="1204.25" cy="835.91" r="1.6"/><circle cx="1211.86" cy="835.91" r="1.6"/><circle cx="1219.48" cy="843.94" r="1.6"/><circle cx="1227.09" cy="842.88" r="1.6"/><circle cx="1234.71" cy="841.82" r="1.6"/><circle cx="1242.32" cy="841.82" r="1.6"/><circle cx="1249.93" cy="841.82" r="1.6"/><circle cx="1257.55" cy="840.91" r="1.6"/><circle cx="1265.16" cy="840.91" r="1.6"/><circle cx="1272.78" cy="838.79" r="1.6"/><circle cx="1280.39" cy="837.88" r="1.6"/><circle cx="1288.00" cy="837.88" r="1.6"/><circle cx="1295.62" cy="836.82" r="1.6"/><circle cx="1303.23" cy="834.70" r="1.6"/><circle cx="1310.85" cy="834.70" r="1.6"/><circle cx="1318.46" cy="834.70" r="1.6"/><circle cx="1326.07" cy="833.79" r="1.6"/><circle cx="1333.69" cy="833.79" r="1.6"/><circle cx="1341.30" cy="833.79" r="1.6"/><circle cx="1348.92" cy="833.79" r="1.6"/><circle cx="1356.53" cy="832.73" r="1.6"/><circle cx="1364.14" cy="831.82" r="1.6"/><circle cx="1371.76" cy="831.82" r="1.6"/><circle cx="1379.37" cy="830.76" r="1.6"/><circle cx="1386.98" cy="828.79" r="1.6"/><circle cx="1394.60" cy="828.79" r="1.6"/><circle cx="1402.21" cy="827.73" r="1.6"/><circle cx="1409.83" cy="826.67" r="1.6"/><circle cx="1417.44" cy="825.76" r="1.6"/><circle cx="1425.05" cy="825.76" r="1.6"/><circle cx="1432.67" cy="824.70" r="1.6"/><circle cx="1440.28" cy="824.70" r="1.6"/><circle cx="1447.90" cy="822.73" r="1.6"/><circle cx="1455.51" cy="822.73" r="1.6"/><circle cx="1463.12" cy="820.61" r="1.6"/><circle cx="1470.74" cy="817.58" r="1.6"/><circle cx="1478.35" cy="813.64" r="1.6"/><circle cx="1485.97" cy="812.58" r="1.6"/><circle cx="1493.58" cy="811.52" r="1.6"/><circle cx="1501.19" cy="811.52" r="1.6"/><circle cx="1508.81" cy="809.55" r="1.6"/><circle cx="1516.42" cy="808.48" r="1.6"/><circle cx="1524.04" cy="808.48" r="1.6"/><circle cx="1531.65" cy="807.58" r="1.6"/><circle cx="1539.26" cy="806.52" r="1.6"/><circle cx="1546.88" cy="806.52" r="1.6"/><circle cx="1554.49" cy="802.58" r="1.6"/><circle cx="1562.11" cy="802.58" r="1.6"/><circle cx="1569.72" cy="800.45" r="1.6"/><circle cx="1577.33" cy="798.48" r="1.6"/><circle cx="1584.95" cy="797.58" r="1.6"/><circle cx="1592.56" cy="797.58" r="1.6"/><circle cx="1600.18" cy="797.58" r="1.6"/><circle cx="1607.79" cy="797.58" r="1.6"/><circle cx="1615.40" cy="796.52" r="1.6"/><circle cx="1623.02" cy="796.52" r="1.6"/><circle cx="1630.63" cy="795.45" r="1.6"/><circle cx="1638.25" cy="795.45" r="1.6"/><circle cx="1645.86" cy="795.45" r="1.6"/><circle cx="1653.47" cy="795.45" r="1.6"/><circle cx="1661.09" cy="793.48" r="1.6"/><circle cx="1668.70" cy="791.52" r="1.6"/><circle cx="1676.32" cy="790.45" r="1.6"/><circle cx="1683.93" cy="789.55" r="1.6"/><circle cx="1691.54" cy="789.55" r="1.6"/><circle cx="1699.16" cy="790.45" r="1.6"/><circle cx="1706.77" cy="789.55" r="1.6"/><circle cx="1714.39" cy="789.55" r="1.6"/><circle cx="1722.00" cy="788.48" r="1.6"/><circle cx="1729.61" cy="788.48" r="1.6"/><circle cx="1737.23" cy="788.48" r="1.6"/><circle cx="1744.84" cy="788.48" r="1.6"/><circle cx="1752.45" cy="787.42" r="1.6"/><circle cx="1760.07" cy="786.52" r="1.6"/><circle cx="1767.68" cy="786.52" r="1.6"/><circle cx="1775.30" cy="785.45" r="1.6"/><circle cx="1782.91" cy="785.45" r="1.6"/><circle cx="1790.52" cy="785.45" r="1.6"/><circle cx="1798.14" cy="785.45" r="1.6"/><circle cx="1805.75" cy="783.48" r="1.6"/><circle cx="1813.37" cy="782.42" r="1.6"/><circle cx="1820.98" cy="782.42" r="1.6"/><circle cx="1828.59" cy="782.42" r="1.6"/><circle cx="1836.21" cy="782.42" r="1.6"/><circle cx="1843.82" cy="781.52" r="1.6"/><circle cx="1851.44" cy="780.45" r="1.6"/><circle cx="1859.05" cy="779.39" r="1.6"/><circle cx="1866.66" cy="779.39" r="1.6"/><circle cx="1874.28" cy="778.48" r="1.6"/><circle cx="1881.89" cy="778.48" r="1.6"/><circle cx="1889.51" cy="778.48" r="1.6"/><circle cx="1897.12" cy="777.42" r="1.6"/><circle cx="1904.73" cy="776.52" r="1.6"/><circle cx="1912.35" cy="776.52" r="1.6"/><circle cx="1919.96" cy="776.52" r="1.6"/><circle cx="1927.58" cy="775.45" r="1.6"/></g>
<rect x="988.20" y="876.95" width="9.3" height="2.7" rx="1.3" fill="#73BF69"/><text x="1003.00" y="881.20" font-size="8.3" fill="#ccccdc">Size (reth)</text>
<text x="13.70" y="20.10" font-size="8.4" fill="#6e9fff" text-anchor="start" stroke="#6e9fff" stroke-width="0.28" style="letter-spacing:.028em">instance</text><text x="62.60" y="20.40" font-size="9.7" fill="#ccccdc" text-anchor="start">localhost:9001</text><text x="22.30" y="45.50" font-size="11.1" fill="#ccccdc" text-anchor="start" stroke="#ccccdc" stroke-width="0.28" style="letter-spacing:.028em">Overview</text><text x="22.30" y="477.20" font-size="11.1" fill="#ccccdc" text-anchor="start" stroke="#ccccdc" stroke-width="0.28" style="letter-spacing:.028em">Database</text><text x="12.90" y="71.60" font-size="9.7" fill="#ccccdc" text-anchor="start" stroke="#ccccdc" stroke-width="0.28" style="letter-spacing:.028em">Connected peers</text><text x="984.20" y="71.60" font-size="9.7" fill="#ccccdc" text-anchor="start" stroke="#ccccdc" stroke-width="0.28" style="letter-spacing:.028em">Stage checkpoints</text><g transform="translate(1084.40 69.60)"><circle r="4.15" fill="none" stroke="#b9bac7" stroke-width="0.7"/><rect x="-0.33" y="-0.55" width="0.66" height="2.5" fill="#b9bac7"/><rect x="-0.4" y="-2.0" width="0.8" height="0.8" fill="#b9bac7"/></g><text x="14.00" y="275.80" font-size="9.7" fill="#ccccdc" text-anchor="start" stroke="#ccccdc" stroke-width="0.28" style="letter-spacing:.028em">Sync progress (stage progress in %)</text><text x="985.30" y="275.80" font-size="9.7" fill="#ccccdc" text-anchor="start" stroke="#ccccdc" stroke-width="0.28" style="letter-spacing:.028em">Sync progress (stage progress as highest block number reached)</text><text x="14.00" y="504.10" font-size="9.7" fill="#ccccdc" text-anchor="start" stroke="#ccccdc" stroke-width="0.28" style="letter-spacing:.028em">Average commit time</text><g transform="translate(126.30 501.30)"><circle r="4.15" fill="none" stroke="#b9bac7" stroke-width="0.7"/><rect x="-0.33" y="-0.55" width="0.66" height="2.5" fill="#b9bac7"/><rect x="-0.4" y="-2.0" width="0.8" height="0.8" fill="#b9bac7"/></g><text x="985.30" y="504.10" font-size="9.7" fill="#ccccdc" text-anchor="start" stroke="#ccccdc" stroke-width="0.28" style="letter-spacing:.028em">Commit time heatmap</text><text x="14.00" y="706.90" font-size="9.7" fill="#ccccdc" text-anchor="start" stroke="#ccccdc" stroke-width="0.28" style="letter-spacing:.028em">Database tables</text><g transform="translate(103.40 703.80)"><circle r="4.15" fill="none" stroke="#b9bac7" stroke-width="0.7"/><rect x="-0.33" y="-0.55" width="0.66" height="2.5" fill="#b9bac7"/><rect x="-0.4" y="-2.0" width="0.8" height="0.8" fill="#b9bac7"/></g><text x="985.30" y="706.90" font-size="9.7" fill="#ccccdc" text-anchor="start" stroke="#ccccdc" stroke-width="0.28" style="letter-spacing:.028em">Database growth</text><g transform="translate(1079.50 703.90)"><circle r="4.15" fill="none" stroke="#b9bac7" stroke-width="0.7"/><rect x="-0.33" y="-0.55" width="0.66" height="2.5" fill="#b9bac7"/><rect x="-0.4" y="-2.0" width="0.8" height="0.8" fill="#b9bac7"/></g>
</svg>
<div style="position:absolute;left:0;top:0;width:1955px;height:3px;background:linear-gradient(rgba(8,8,10,.45),rgba(8,8,10,0))"></div>
<div style="position:absolute;left:1955px;top:0;width:3px;height:9px;background:#23262f"></div>
<div style="position:absolute;left:1955px;top:10px;width:3px;height:881px;background:#c6c7c9"></div>
</body></html>
